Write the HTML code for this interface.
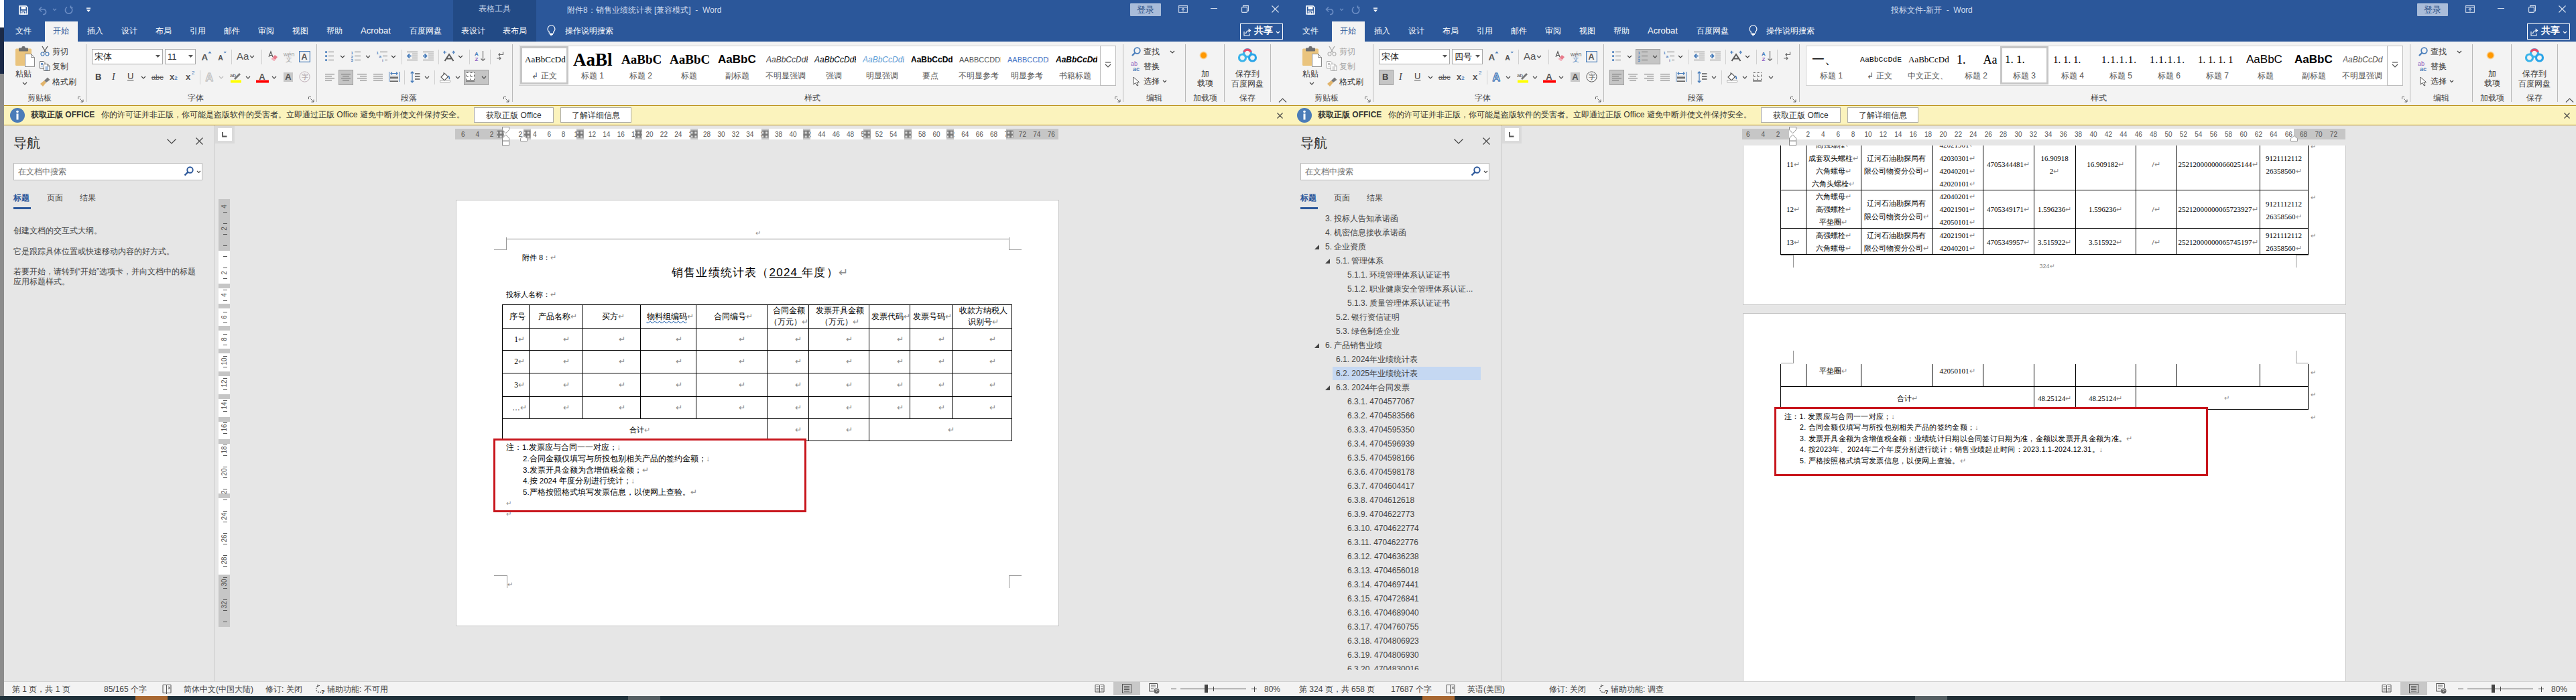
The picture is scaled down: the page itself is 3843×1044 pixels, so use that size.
<!DOCTYPE html><html><head><meta charset="utf-8"><title>Word</title><style>
*{margin:0;padding:0}
html,body{width:3843px;height:1044px;overflow:hidden;background:#8a8a8a}
body{position:relative;font-family:'Liberation Sans',sans-serif;}
.w{position:absolute;top:0;width:1926px;height:1038px;overflow:hidden}
.t{position:absolute;white-space:nowrap}
.r{position:absolute}
.s{position:absolute;overflow:visible}
</style></head><body><div class="r" style="left:0px;top:0px;width:6px;height:41px;background:#ffffff;"></div><div class="r" style="left:0px;top:41px;width:6px;height:69px;background:#1b2a48;"></div><div class="r" style="left:0px;top:110px;width:6px;height:928px;background:#8c8c8c;"></div><div class="w" style="left:0px"><div class="r" style="left:6px;top:0px;width:1920px;height:62px;background:#2b579a;"></div><div class="r" style="left:676px;top:0px;width:124px;height:62px;background:#224a85;"></div><div class="t" style="left:676px;width:124px;text-align:center;top:2.8px;line-height:20px;font-size:12px;color:#c5d2e6;">表格工具</div><div class="t" style="left:846px;top:4.5px;line-height:20px;font-size:12px;color:#d3deef;">附件8：销售业绩统计表 [兼容模式]&nbsp; -&nbsp; Word</div><svg class="s" style="left:28px;top:8px;" width="14" height="14" viewBox="0 0 14 14"><path d="M1 1 H11 L13 3 V13 H1 Z" fill="none" stroke="#fff" stroke-width="1.6"/><rect x="3.5" y="2" width="7" height="4" fill="#fff"/><rect x="3.5" y="8.5" width="7" height="4.5" fill="none" stroke="#fff" stroke-width="1.4"/><rect x="5.5" y="10" width="2" height="3" fill="#fff"/></svg><svg class="s" style="left:57px;top:9px;" width="15" height="13" viewBox="0 0 15 13"><path d="M2 5 H9 A4 4 0 0 1 9 12.5 H7" fill="none" stroke="#6b8dc4" stroke-width="1.6"/><path d="M5 1.5 L1.5 5 L5 8.5" fill="none" stroke="#6b8dc4" stroke-width="1.6"/></svg><svg class="s" style="left:78px;top:12.25px;" width="7" height="4.5" viewBox="0 0 7 4.5"><path d="M1 1 L3.5 3.5 L6 1" fill="none" stroke="#6b8dc4" stroke-width="1.2"/></svg><svg class="s" style="left:96px;top:8px;" width="14" height="14" viewBox="0 0 14 14"><path d="M9.5 2.8 A5.2 5.2 0 1 1 4 2.6" fill="none" stroke="#6b8dc4" stroke-width="1.6"/><path d="M9.5 0.5 V3.5 H12.5" fill="none" stroke="#6b8dc4" stroke-width="1.6"/></svg><svg class="s" style="left:129px;top:11px;" width="6" height="8" viewBox="0 0 6 8"><rect x="0" y="0.5" width="6" height="1.4" fill="#fff"/><path d="M0 3.5 H6 L3 7 Z" fill="#fff"/></svg><div class="r" style="left:67px;top:32px;width:49px;height:30px;background:#f3f3f3;"></div><div class="t" style="left:23px;top:35.5px;line-height:20px;font-size:12px;color:#ffffff;">文件</div><div class="t" style="left:79px;top:35.5px;line-height:20px;font-size:12px;color:#2b579a;">开始</div><div class="t" style="left:130px;top:35.5px;line-height:20px;font-size:12px;color:#ffffff;">插入</div><div class="t" style="left:181px;top:35.5px;line-height:20px;font-size:12px;color:#ffffff;">设计</div><div class="t" style="left:232px;top:35.5px;line-height:20px;font-size:12px;color:#ffffff;">布局</div><div class="t" style="left:283px;top:35.5px;line-height:20px;font-size:12px;color:#ffffff;">引用</div><div class="t" style="left:334px;top:35.5px;line-height:20px;font-size:12px;color:#ffffff;">邮件</div><div class="t" style="left:385px;top:35.5px;line-height:20px;font-size:12px;color:#ffffff;">审阅</div><div class="t" style="left:436px;top:35.5px;line-height:20px;font-size:12px;color:#ffffff;">视图</div><div class="t" style="left:487px;top:35.5px;line-height:20px;font-size:12px;color:#ffffff;">帮助</div><div class="t" style="left:538px;top:35.5px;line-height:20px;font-size:13px;color:#ffffff;">Acrobat</div><div class="t" style="left:611px;top:35.5px;line-height:20px;font-size:12px;color:#ffffff;">百度网盘</div><div class="t" style="left:688px;top:35.5px;line-height:20px;font-size:12px;color:#ffffff;">表设计</div><div class="t" style="left:750px;top:35.5px;line-height:20px;font-size:12px;color:#ffffff;">表布局</div><svg class="s" style="left:816px;top:37px;" width="13" height="17" viewBox="0 0 13 17"><path d="M6.5 1 A5.2 5.2 0 0 0 3.3 10.4 V12.5 H9.7 V10.4 A5.2 5.2 0 0 0 6.5 1 Z" fill="none" stroke="#fff" stroke-width="1.2"/><path d="M4 14.3 H9 M5 16 H8" stroke="#fff" stroke-width="1.2"/></svg><div class="t" style="left:843px;top:35.5px;line-height:20px;font-size:12px;color:#fff;">操作说明搜索</div><div class="r" style="left:1686px;top:5px;width:46px;height:19px;background:#a9bcd9;border-radius:1px;"></div><div class="t" style="left:1686px;width:46px;text-align:center;top:4.5px;line-height:20px;font-size:13px;color:#2b4f86;">登录</div><svg class="s" style="left:1758px;top:8px;" width="14" height="11" viewBox="0 0 14 11"><rect x="0.6" y="0.6" width="12.8" height="9.8" fill="none" stroke="#c8d4e8" stroke-width="1.1"/><path d="M0.6 3 H13.4" stroke="#c8d4e8" stroke-width="1.1"/><path d="M7 9.5 V4.5 M4.8 6.6 L7 4.4 L9.2 6.6" fill="none" stroke="#c8d4e8" stroke-width="1.1"/></svg><div class="r" style="left:1806px;top:12px;width:10px;height:1px;background:#d8e1ef;"></div><svg class="s" style="left:1852px;top:8px;" width="11" height="11" viewBox="0 0 11 11"><rect x="0.6" y="2.6" width="7.8" height="7.8" fill="none" stroke="#d8e1ef" stroke-width="1.1" rx="1"/><path d="M2.6 2.6 V0.6 H10.4 V8.4 H8.4" fill="none" stroke="#d8e1ef" stroke-width="1.1"/></svg><svg class="s" style="left:1897px;top:8px;" width="11" height="11" viewBox="0 0 11 11"><path d="M0.5 0.5 L10.5 10.5 M10.5 0.5 L0.5 10.5" stroke="#d8e1ef" stroke-width="1.1"/></svg><div class="r" style="left:1850px;top:35px;width:64px;height:24px;background:none;border:1.5px solid #fff;box-sizing:border-box;"></div><svg class="s" style="left:1855px;top:41px;" width="13" height="13" viewBox="0 0 13 13"><path d="M1 6 V12 H9 V9" fill="none" stroke="#fff" stroke-width="1.1"/><path d="M3.5 9.5 C4 6 6.5 4.5 9.5 4.5 M7.5 2 L10.5 4.5 L7.5 7" fill="none" stroke="#fff" stroke-width="1.2"/></svg><div class="t" style="left:1871px;top:35.5px;line-height:20px;font-size:13.5px;color:#fff;font-weight:700;">共享</div><svg class="s" style="left:1903px;top:45.75px;" width="7" height="4.5" viewBox="0 0 7 4.5"><path d="M1 1 L3.5 3.5 L6 1" fill="none" stroke="#fff" stroke-width="1.2"/></svg><div class="r" style="left:6px;top:62px;width:1920px;height:95px;background:#f3f3f3;"></div><svg class="s" style="left:23px;top:69px;" width="29" height="32" viewBox="0 0 29 32"><rect x="0" y="3.5" width="24" height="25.5" rx="1.5" fill="#eac47e"/><rect x="5" y="2.5" width="14" height="5" rx="1" fill="#6f6f6f"/><rect x="9.5" y="0" width="5" height="4" rx="1.5" fill="#6f6f6f"/><path d="M14.5 11.5 H23.5 L28.5 16.5 V30.5 H14.5 Z" fill="#fff" stroke="#8a8a8a" stroke-width="1"/><path d="M23.5 11.5 V16.5 H28.5" fill="none" stroke="#8a8a8a" stroke-width="1"/></svg><div class="t" style="left:23px;top:99.5px;line-height:20px;font-size:12px;color:#333;">粘贴</div><svg class="s" style="left:33px;top:121.5px;" width="8" height="5.0" viewBox="0 0 8 5.0"><path d="M1 1 L4.0 4.0 L7 1" fill="none" stroke="#444" stroke-width="1.2"/></svg><svg class="s" style="left:60px;top:68px;" width="14" height="16" viewBox="0 0 14 16"><path d="M3 1 L9 11 M11 1 L5 11" stroke="#555" stroke-width="1.3"/><circle cx="3.5" cy="12.5" r="2.5" fill="none" stroke="#4a7ebb" stroke-width="1.2"/><circle cx="10.5" cy="12.5" r="2.5" fill="none" stroke="#4a7ebb" stroke-width="1.2"/></svg><div class="t" style="left:78px;top:66.5px;line-height:20px;font-size:12px;color:#444;">剪切</div><svg class="s" style="left:59px;top:91px;" width="16" height="15" viewBox="0 0 16 15"><path d="M0.5 0.5 H6 L8 2.5 V11 H0.5 Z" fill="#fff" stroke="#666" stroke-width="1"/><path d="M2 3.5 H5 M2 5.5 H5 M2 7.5 H5" stroke="#4a7ebb" stroke-width="1"/><path d="M6.5 4.5 H12 L15 7.5 V14.5 H6.5 Z" fill="#fff" stroke="#666" stroke-width="1"/><path d="M12 4.5 V7.5 H15" fill="none" stroke="#666" stroke-width="1"/><path d="M8.5 9 H13 M8.5 11 H13 M8.5 13 H13" stroke="#4a7ebb" stroke-width="1"/></svg><div class="t" style="left:78px;top:88.5px;line-height:20px;font-size:12px;color:#444;">复制</div><svg class="s" style="left:59px;top:114px;" width="17" height="16" viewBox="0 0 17 16"><path d="M1 11 L7 6 L10 9 L5 15 Z" fill="#e2b56c"/><path d="M7 6 L12 1.5 L15.5 5 L10 9 Z" fill="#7a7a7a"/></svg><div class="t" style="left:78px;top:112.0px;line-height:20px;font-size:12px;color:#333;">格式刷</div><div class="t" style="left:41px;top:135.6px;line-height:20px;font-size:12px;color:#444;">剪贴板</div><svg class="s" style="left:116px;top:144px;" width="9" height="9" viewBox="0 0 9 9"><path d="M0.5 4 V0.5 H4 M0.5 0.5 H0.5" fill="none" stroke="#666" stroke-width="1"/><path d="M3 3 L8 8 M8 4.5 V8 H4.5" fill="none" stroke="#666" stroke-width="1"/></svg><div class="r" style="left:128px;top:66px;width:1px;height:86px;background:#b9b9b9;"></div><div class="r" style="left:137px;top:73px;width:106px;height:23px;background:#fff;border:1px solid #a9a9a9;box-sizing:border-box;"></div><div class="t" style="left:141px;top:74.5px;line-height:20px;font-size:13px;color:#222;">宋体</div><svg class="s" style="left:232px;top:82px;" width="7" height="4" viewBox="0 0 7 4"><path d="M0 0 H7 L3.5 4 Z" fill="#555"/></svg><div class="r" style="left:246px;top:73px;width:46px;height:23px;background:#fff;border:1px solid #a9a9a9;box-sizing:border-box;"></div><div class="t" style="left:250px;top:74.5px;line-height:20px;font-size:13px;color:#222;">11</div><svg class="s" style="left:281px;top:82px;" width="7" height="4" viewBox="0 0 7 4"><path d="M0 0 H7 L3.5 4 Z" fill="#555"/></svg><svg class="s" style="left:300px;top:76px;" width="16" height="16" viewBox="0 0 16 16"><text x="0.5" y="14.2" font-size="13.5" font-family="Liberation Sans" font-weight="700" fill="#555">A</text><path d="M10.5 3.5 L13 0.5 L15.5 3.5 Z" fill="#4a7ebb"/></svg><svg class="s" style="left:325px;top:76px;" width="14" height="16" viewBox="0 0 14 16"><text x="0.3" y="14.2" font-size="10.5" font-family="Liberation Sans" font-weight="700" fill="#555">A</text><path d="M8.5 1 H13 L10.75 3.5 Z" fill="#4a7ebb"/></svg><div class="r" style="left:345px;top:74px;width:1px;height:22px;background:#d0d0d0;"></div><div class="t" style="left:353px;top:74.0px;line-height:20px;font-size:15px;color:#555;">Aa</div><svg class="s" style="left:372px;top:82.0px;" width="8" height="5.0" viewBox="0 0 8 5.0"><path d="M1 1 L4.0 4.0 L7 1" fill="none" stroke="#444" stroke-width="1.2"/></svg><div class="r" style="left:390px;top:74px;width:1px;height:22px;background:#d0d0d0;"></div><svg class="s" style="left:400px;top:76px;" width="15" height="16" viewBox="0 0 15 16"><path d="M1 9 L4 1 L7 9 M2 6.5 H6" fill="none" stroke="#555" stroke-width="1.2"/><path d="M5 12 L10 6 L14 9 L9 15 Z" fill="#e87a8a"/><path d="M5 12 L7 10 L11 13 L9 15 Z" fill="#f3b3bd"/></svg><div class="t" style="left:423px;top:76.0px;line-height:10px;font-size:9px;color:#a0a0a0;">wén</div><div class="t" style="left:426px;top:84.0px;line-height:10px;font-size:10px;color:#a0a0a0;">文</div><svg class="s" style="left:446px;top:76px;" width="17" height="17" viewBox="0 0 17 17"><rect x="0.6" y="0.6" width="15.8" height="15.8" fill="none" stroke="#4a7ebb" stroke-width="1.2"/><text x="3.6" y="12.8" font-size="12.5" font-family="Liberation Sans" font-weight="700" fill="#555">A</text></svg><div class="t" style="left:142px;top:104.5px;line-height:20px;font-size:13px;color:#444;font-weight:700;">B</div><div class="t" style="left:167px;top:104.5px;line-height:20px;font-size:14px;color:#444;font-family:'Liberation Serif',serif;"><i>I</i></div><div class="t" style="left:190px;top:104.0px;line-height:20px;font-size:13px;color:#444;"><u>U</u></div><svg class="s" style="left:210px;top:112.5px;" width="8" height="5.0" viewBox="0 0 8 5.0"><path d="M1 1 L4.0 4.0 L7 1" fill="none" stroke="#444" stroke-width="1.2"/></svg><div class="t" style="left:226px;top:105.0px;line-height:20px;font-size:11px;color:#555;"><s>abc</s></div><div class="t" style="left:253px;top:104.5px;line-height:20px;font-size:13px;color:#555;font-weight:700;letter-spacing:0px">x<span style="font-size:8px;color:#4a7ebb">2</span></div><div class="t" style="left:277px;top:104.5px;line-height:20px;font-size:13px;color:#555;font-weight:700;">x</div><div class="t" style="left:286px;top:105.0px;line-height:8px;font-size:8px;color:#4a7ebb;">2</div><div class="r" style="left:298px;top:105px;width:1px;height:21px;background:#d0d0d0;"></div><svg class="s" style="left:305px;top:106px;" width="18" height="17" viewBox="0 0 18 17"><text x="1.5" y="15" font-size="16" font-family="Liberation Sans" font-weight="700" fill="#f8f8f8" stroke="#c4c4c4" stroke-width="1.3" stroke-linejoin="round">A</text></svg><svg class="s" style="left:326px;top:112.5px;" width="8" height="5.0" viewBox="0 0 8 5.0"><path d="M1 1 L4.0 4.0 L7 1" fill="none" stroke="#bbb" stroke-width="1.2"/></svg><svg class="s" style="left:343px;top:107px;" width="18" height="17" viewBox="0 0 18 17"><text x="0" y="8" font-size="8" fill="#555" font-family="Liberation Sans">ab</text><path d="M6 10 L14 2 L16 4 L8 12 Z" fill="#777"/><rect x="1" y="12.5" width="16" height="4" fill="#ffff00"/></svg><svg class="s" style="left:366px;top:112.5px;" width="8" height="5.0" viewBox="0 0 8 5.0"><path d="M1 1 L4.0 4.0 L7 1" fill="none" stroke="#444" stroke-width="1.2"/></svg><svg class="s" style="left:382px;top:107px;" width="19" height="17" viewBox="0 0 19 17"><text x="4.3" y="11.8" font-size="13" font-family="Liberation Sans" font-weight="700" fill="#555">A</text><rect x="0" y="12.5" width="19" height="4" fill="#ff0000"/></svg><svg class="s" style="left:405px;top:112.5px;" width="8" height="5.0" viewBox="0 0 8 5.0"><path d="M1 1 L4.0 4.0 L7 1" fill="none" stroke="#444" stroke-width="1.2"/></svg><div class="r" style="left:423px;top:108px;width:14px;height:14px;background:#c8c8c8;"></div><svg class="s" style="left:423px;top:108px;" width="14" height="14" viewBox="0 0 14 14"><text x="2.3" y="11" font-size="13" font-family="Liberation Sans" font-weight="700" fill="#555">A</text></svg><svg class="s" style="left:446px;top:106px;" width="17" height="17" viewBox="0 0 17 17"><circle cx="8.5" cy="8.5" r="7.6" fill="none" stroke="#c0b0b8" stroke-width="1"/></svg><div class="t" style="left:446px;width:17px;text-align:center;top:104.5px;line-height:20px;font-size:10px;color:#a09098;">字</div><div class="t" style="left:280px;top:135.6px;line-height:20px;font-size:12px;color:#444;">字体</div><svg class="s" style="left:460px;top:144px;" width="9" height="9" viewBox="0 0 9 9"><path d="M0.5 4 V0.5 H4 M0.5 0.5 H0.5" fill="none" stroke="#666" stroke-width="1"/><path d="M3 3 L8 8 M8 4.5 V8 H4.5" fill="none" stroke="#666" stroke-width="1"/></svg><div class="r" style="left:472px;top:66px;width:1px;height:86px;background:#b9b9b9;"></div><svg class="s" style="left:484px;top:75px;" width="15" height="16" viewBox="0 0 15 16"><circle cx="2.5" cy="2.6" r="1.6" fill="#4a7ebb"/><circle cx="2.5" cy="8.6" r="1.6" fill="#4a7ebb"/><circle cx="2.5" cy="14.6" r="1.6" fill="#4a7ebb"/><path d="M6 2.5 H14 M6 8.5 H14 M6 14.5 H14" stroke="#6a6a6a" stroke-width="1"/></svg><svg class="s" style="left:507px;top:82.0px;" width="8" height="5.0" viewBox="0 0 8 5.0"><path d="M1 1 L4.0 4.0 L7 1" fill="none" stroke="#444" stroke-width="1.2"/></svg><svg class="s" style="left:523px;top:75px;" width="16" height="17" viewBox="0 0 16 17"><text x="0.5" y="5.5" font-size="6" font-weight="700" fill="#4a7ebb" font-family="Liberation Sans">1</text><text x="0.5" y="11.5" font-size="6" font-weight="700" fill="#4a7ebb" font-family="Liberation Sans">2</text><text x="0.5" y="17" font-size="6" font-weight="700" fill="#4a7ebb" font-family="Liberation Sans">3</text><path d="M6 2.5 H15 M6 8.5 H15 M6 14.5 H15" stroke="#6a6a6a" stroke-width="1"/></svg><svg class="s" style="left:545px;top:82.0px;" width="8" height="5.0" viewBox="0 0 8 5.0"><path d="M1 1 L4.0 4.0 L7 1" fill="none" stroke="#444" stroke-width="1.2"/></svg><svg class="s" style="left:561px;top:75px;" width="18" height="17" viewBox="0 0 18 17"><text x="0.5" y="5.5" font-size="6" font-weight="700" fill="#4a7ebb" font-family="Liberation Sans">1</text><text x="4.5" y="11" font-size="6" font-weight="700" fill="#4a7ebb" font-family="Liberation Sans">a</text><text x="9" y="17" font-size="6" font-weight="700" fill="#4a7ebb" font-family="Liberation Sans">i</text><path d="M6 2.5 H17 M10 8.5 H17 M13 14.5 H17" stroke="#6a6a6a" stroke-width="1"/></svg><svg class="s" style="left:583px;top:82.0px;" width="8" height="5.0" viewBox="0 0 8 5.0"><path d="M1 1 L4.0 4.0 L7 1" fill="none" stroke="#444" stroke-width="1.2"/></svg><div class="r" style="left:599px;top:74px;width:1px;height:22px;background:#d0d0d0;"></div><svg class="s" style="left:607px;top:75px;" width="17" height="16" viewBox="0 0 17 16"><path d="M0 2.5 H16 M8 5.5 H16 M8 8.5 H16 M8 11.5 H16 M0 14.5 H16" stroke="#6a6a6a" stroke-width="1"/><path d="M1 8.5 H6.5 M4 5.5 L1 8.5 L4 11.5" fill="none" stroke="#4a7ebb" stroke-width="1.8"/></svg><svg class="s" style="left:631px;top:75px;" width="17" height="16" viewBox="0 0 17 16"><path d="M0 2.5 H16 M8 5.5 H16 M8 8.5 H16 M8 11.5 H16 M0 14.5 H16" stroke="#6a6a6a" stroke-width="1"/><path d="M0 8.5 H5.5 M2.5 5.5 L5.5 8.5 L2.5 11.5" fill="none" stroke="#4a7ebb" stroke-width="1.8"/></svg><div class="r" style="left:654px;top:74px;width:1px;height:22px;background:#d0d0d0;"></div><svg class="s" style="left:661px;top:75px;" width="18" height="17" viewBox="0 0 18 17"><path d="M2.5 16 L9 6 L15.5 16 M5 12.5 H13" fill="none" stroke="#5a5a5a" stroke-width="2"/><path d="M1 3 H5 M3 1 L1 3 L3 5 M17 3 H13 M15 1 L17 3 L15 5" fill="none" stroke="#4a7ebb" stroke-width="1.2"/></svg><svg class="s" style="left:683px;top:82.0px;" width="8" height="5.0" viewBox="0 0 8 5.0"><path d="M1 1 L4.0 4.0 L7 1" fill="none" stroke="#444" stroke-width="1.2"/></svg><div class="r" style="left:700px;top:74px;width:1px;height:22px;background:#d0d0d0;"></div><svg class="s" style="left:708px;top:75px;" width="16" height="17" viewBox="0 0 16 17"><text x="0" y="7.5" font-size="8" font-weight="700" fill="#4a7ebb" font-family="Liberation Sans">A</text><text x="0.5" y="16" font-size="8" font-weight="700" fill="#8a5cc0" font-family="Liberation Sans">Z</text><path d="M12.5 1 V15.5 M9.5 12.5 L12.5 15.5 L15.5 12.5" fill="none" stroke="#6a6a6a" stroke-width="1.2"/></svg><div class="r" style="left:731px;top:74px;width:1px;height:22px;background:#d0d0d0;"></div><svg class="s" style="left:740px;top:77px;" width="12" height="13" viewBox="0 0 12 13"><path d="M10.5 0.5 V4.5 H4 M6 2.5 L4 4.5 L6 6.5" fill="none" stroke="#6a6a6a" stroke-width="1.2"/><path d="M1 10 H7 M5 8 L7 10 L5 12" fill="none" stroke="#6a6a6a" stroke-width="1.2"/></svg><div class="r" style="left:505px;top:104px;width:22px;height:23px;background:#c5c5c5;border:1px solid #9d9d9d;box-sizing:border-box;"></div><svg class="s" style="left:485px;top:109px;" width="15" height="13" viewBox="0 0 15 13"><path d="M0 1.5 h14M0 4.5 h10M0 7.5 h14M0 10.5 h10" stroke="#6a6a6a" stroke-width="1"/></svg><svg class="s" style="left:509px;top:109px;" width="15" height="13" viewBox="0 0 15 13"><path d="M0 1.5 h14M2 4.5 h10M0 7.5 h14M2 10.5 h10" stroke="#6a6a6a" stroke-width="1"/></svg><svg class="s" style="left:533px;top:109px;" width="15" height="13" viewBox="0 0 15 13"><path d="M0 1.5 h14M4 4.5 h10M0 7.5 h14M4 10.5 h10" stroke="#6a6a6a" stroke-width="1"/></svg><svg class="s" style="left:557px;top:109px;" width="15" height="13" viewBox="0 0 15 13"><path d="M0 1.5 h14M0 4.5 h14M0 7.5 h14M0 10.5 h14" stroke="#6a6a6a" stroke-width="1"/></svg><svg class="s" style="left:579px;top:106px;" width="18" height="17" viewBox="0 0 18 17"><path d="M1.5 1 V16 M16.5 1 V16" stroke="#4a7ebb" stroke-width="1"/><path d="M3.5 3.5 H14.5 M6 1.5 L4 3.5 L6 5.5 M12 1.5 L14 3.5 L12 5.5" fill="none" stroke="#4a7ebb" stroke-width="1.2"/><path d="M3 7.5 H15 M3 9.5 H15 M3 11.5 H15 M3 13.5 H15 M3 15.5 H15" stroke="#6a6a6a" stroke-width="1"/></svg><div class="r" style="left:603px;top:105px;width:1px;height:21px;background:#d0d0d0;"></div><svg class="s" style="left:612px;top:106px;" width="15" height="18" viewBox="0 0 15 18"><path d="M3 1 V17 M0.8 3.5 L3 1 L5.2 3.5 M0.8 14.5 L3 17 L5.2 14.5" fill="none" stroke="#4a7ebb" stroke-width="1.3"/><path d="M7 4 H14.5 M7 8 H14.5 M7 12 H14.5" stroke="#555" stroke-width="1.4"/></svg><svg class="s" style="left:633px;top:112.5px;" width="8" height="5.0" viewBox="0 0 8 5.0"><path d="M1 1 L4.0 4.0 L7 1" fill="none" stroke="#444" stroke-width="1.2"/></svg><div class="r" style="left:648px;top:105px;width:1px;height:21px;background:#d0d0d0;"></div><svg class="s" style="left:656px;top:107px;" width="17" height="16" viewBox="0 0 17 16"><path d="M2 8 L7.5 2.5 L12.5 7.5 L7 13 Z" fill="#fff" stroke="#555" stroke-width="1.1"/><path d="M6 1 V4" stroke="#555"/><path d="M13 6 C14.5 8 15 9.5 14 11" fill="none" stroke="#4a7ebb" stroke-width="1.6"/><rect x="0.5" y="13" width="15" height="2.5" fill="#fff" stroke="#999" stroke-width="0.8"/></svg><svg class="s" style="left:679px;top:112.5px;" width="8" height="5.0" viewBox="0 0 8 5.0"><path d="M1 1 L4.0 4.0 L7 1" fill="none" stroke="#444" stroke-width="1.2"/></svg><div class="r" style="left:692px;top:104px;width:37px;height:23px;background:#c5c5c5;border:1px solid #9d9d9d;box-sizing:border-box;"></div><svg class="s" style="left:695px;top:108px;" width="14" height="14" viewBox="0 0 14 14"><rect x="0" y="0" width="13" height="13" fill="#fff"/><rect x="0" y="0" width="1" height="1" fill="#555"/><rect x="0" y="0" width="1" height="1" fill="#555"/><rect x="0" y="6" width="1" height="1" fill="#555"/><rect x="6" y="0" width="1" height="1" fill="#555"/><rect x="0" y="12" width="1" height="1" fill="#555"/><rect x="12" y="0" width="1" height="1" fill="#555"/><rect x="2" y="0" width="1" height="1" fill="#555"/><rect x="0" y="2" width="1" height="1" fill="#555"/><rect x="2" y="6" width="1" height="1" fill="#555"/><rect x="6" y="2" width="1" height="1" fill="#555"/><rect x="2" y="12" width="1" height="1" fill="#555"/><rect x="12" y="2" width="1" height="1" fill="#555"/><rect x="4" y="0" width="1" height="1" fill="#555"/><rect x="0" y="4" width="1" height="1" fill="#555"/><rect x="4" y="6" width="1" height="1" fill="#555"/><rect x="6" y="4" width="1" height="1" fill="#555"/><rect x="4" y="12" width="1" height="1" fill="#555"/><rect x="12" y="4" width="1" height="1" fill="#555"/><rect x="6" y="0" width="1" height="1" fill="#555"/><rect x="0" y="6" width="1" height="1" fill="#555"/><rect x="6" y="6" width="1" height="1" fill="#555"/><rect x="6" y="6" width="1" height="1" fill="#555"/><rect x="6" y="12" width="1" height="1" fill="#555"/><rect x="12" y="6" width="1" height="1" fill="#555"/><rect x="8" y="0" width="1" height="1" fill="#555"/><rect x="0" y="8" width="1" height="1" fill="#555"/><rect x="8" y="6" width="1" height="1" fill="#555"/><rect x="6" y="8" width="1" height="1" fill="#555"/><rect x="8" y="12" width="1" height="1" fill="#555"/><rect x="12" y="8" width="1" height="1" fill="#555"/><rect x="10" y="0" width="1" height="1" fill="#555"/><rect x="0" y="10" width="1" height="1" fill="#555"/><rect x="10" y="6" width="1" height="1" fill="#555"/><rect x="6" y="10" width="1" height="1" fill="#555"/><rect x="10" y="12" width="1" height="1" fill="#555"/><rect x="12" y="10" width="1" height="1" fill="#555"/><rect x="12" y="0" width="1" height="1" fill="#555"/><rect x="0" y="12" width="1" height="1" fill="#555"/><rect x="12" y="6" width="1" height="1" fill="#555"/><rect x="6" y="12" width="1" height="1" fill="#555"/><rect x="12" y="12" width="1" height="1" fill="#555"/><rect x="12" y="12" width="1" height="1" fill="#555"/><rect x="0" y="12" width="13" height="1.5" fill="#444"/></svg><svg class="s" style="left:718px;top:112.5px;" width="8" height="5.0" viewBox="0 0 8 5.0"><path d="M1 1 L4.0 4.0 L7 1" fill="none" stroke="#444" stroke-width="1.2"/></svg><div class="t" style="left:598px;top:135.6px;line-height:20px;font-size:12px;color:#444;">段落</div><svg class="s" style="left:751px;top:144px;" width="9" height="9" viewBox="0 0 9 9"><path d="M0.5 4 V0.5 H4 M0.5 0.5 H0.5" fill="none" stroke="#666" stroke-width="1"/><path d="M3 3 L8 8 M8 4.5 V8 H4.5" fill="none" stroke="#666" stroke-width="1"/></svg><div class="r" style="left:764px;top:66px;width:1px;height:86px;background:#b9b9b9;"></div><div class="r" style="left:774px;top:68px;width:868px;height:60px;background:#fff;border:1px solid #d2d2d2;box-sizing:border-box;"></div><div class="r" style="left:1641px;top:68px;width:24px;height:60px;background:#fff;border:1px solid #bdbdbd;box-sizing:border-box;"></div><svg class="s" style="left:1648px;top:92px;" width="10" height="10" viewBox="0 0 10 10"><path d="M1 1 H9" stroke="#555" stroke-width="1.2"/><path d="M1 4 L5 8 L9 4" fill="none" stroke="#555" stroke-width="1.2"/></svg><div class="t" style="left:1200px;top:135.6px;line-height:20px;font-size:12px;color:#444;">样式</div><svg class="s" style="left:1663px;top:144px;" width="9" height="9" viewBox="0 0 9 9"><path d="M0.5 4 V0.5 H4 M0.5 0.5 H0.5" fill="none" stroke="#666" stroke-width="1"/><path d="M3 3 L8 8 M8 4.5 V8 H4.5" fill="none" stroke="#666" stroke-width="1"/></svg><div class="r" style="left:1675px;top:66px;width:1px;height:86px;background:#b9b9b9;"></div><div class="r" style="left:776px;top:69px;width:72px;height:57px;background:#fff;border:3px solid #c6c6c6;box-sizing:border-box;"></div><div class="t" style="left:783px;top:75px;width:62px;height:28px;line-height:28px;overflow:hidden;text-align:left;font-family:'Liberation Serif',serif;font-size:13px;color:#000;">AaBbCcDd</div><div class="t" style="left:776px;width:72px;text-align:center;top:102.5px;line-height:20px;font-size:12px;color:#555;">↲ 正文</div><div class="t" style="left:855px;top:75px;width:62px;height:28px;line-height:28px;overflow:hidden;text-align:left;font-family:'Liberation Serif',serif;font-size:27px;font-weight:700;color:#000;">AaBl</div><div class="t" style="left:848px;width:72px;text-align:center;top:102.5px;line-height:20px;font-size:12px;color:#555;">标题 1</div><div class="t" style="left:927px;top:75px;width:62px;height:28px;line-height:28px;overflow:hidden;text-align:left;font-family:'Liberation Serif',serif;font-size:19px;font-weight:700;color:#000;">AaBbC</div><div class="t" style="left:920px;width:72px;text-align:center;top:102.5px;line-height:20px;font-size:12px;color:#555;">标题 2</div><div class="t" style="left:999px;top:75px;width:62px;height:28px;line-height:28px;overflow:hidden;text-align:left;font-family:'Liberation Serif',serif;font-size:19px;font-weight:700;color:#000;">AaBbC</div><div class="t" style="left:992px;width:72px;text-align:center;top:102.5px;line-height:20px;font-size:12px;color:#555;">标题</div><div class="t" style="left:1071px;top:75px;width:62px;height:28px;line-height:28px;overflow:hidden;text-align:left;font-size:17px;font-weight:700;color:#000;">AaBbC</div><div class="t" style="left:1064px;width:72px;text-align:center;top:102.5px;line-height:20px;font-size:12px;color:#555;">副标题</div><div class="t" style="left:1143px;top:75px;width:62px;height:28px;line-height:28px;overflow:hidden;text-align:left;font-size:12px;color:#444;"><i>AaBbCcDdE</i></div><div class="t" style="left:1136px;width:72px;text-align:center;top:102.5px;line-height:20px;font-size:12px;color:#555;">不明显强调</div><div class="t" style="left:1215px;top:75px;width:62px;height:28px;line-height:28px;overflow:hidden;text-align:left;font-size:12px;color:#000;"><i>AaBbCcDdE</i></div><div class="t" style="left:1208px;width:72px;text-align:center;top:102.5px;line-height:20px;font-size:12px;color:#555;">强调</div><div class="t" style="left:1287px;top:75px;width:62px;height:28px;line-height:28px;overflow:hidden;text-align:left;font-size:12px;color:#5b9bd5;"><i>AaBbCcDdE</i></div><div class="t" style="left:1280px;width:72px;text-align:center;top:102.5px;line-height:20px;font-size:12px;color:#555;">明显强调</div><div class="t" style="left:1359px;top:75px;width:62px;height:28px;line-height:28px;overflow:hidden;text-align:left;font-size:12px;font-weight:700;color:#000;">AaBbCcDdE</div><div class="t" style="left:1352px;width:72px;text-align:center;top:102.5px;line-height:20px;font-size:12px;color:#555;">要点</div><div class="t" style="left:1431px;top:75px;width:62px;height:28px;line-height:28px;overflow:hidden;text-align:left;font-size:11px;color:#555;">AABBCCDDE</div><div class="t" style="left:1424px;width:72px;text-align:center;top:102.5px;line-height:20px;font-size:12px;color:#555;">不明显参考</div><div class="t" style="left:1503px;top:75px;width:62px;height:28px;line-height:28px;overflow:hidden;text-align:left;font-size:11px;color:#4472c4;">AABBCCDDE</div><div class="t" style="left:1496px;width:72px;text-align:center;top:102.5px;line-height:20px;font-size:12px;color:#555;">明显参考</div><div class="t" style="left:1575px;top:75px;width:62px;height:28px;line-height:28px;overflow:hidden;text-align:left;font-size:12px;font-weight:700;color:#000;"><i>AaBbCcDdE</i></div><div class="t" style="left:1568px;width:72px;text-align:center;top:102.5px;line-height:20px;font-size:12px;color:#555;">书籍标题</div><svg class="s" style="left:1688px;top:70px;" width="14" height="14" viewBox="0 0 14 14"><circle cx="8.5" cy="5.5" r="4.3" fill="none" stroke="#4a7ebb" stroke-width="1.8"/><path d="M5.5 8.5 L1 13" stroke="#4a7ebb" stroke-width="2.4"/></svg><div class="t" style="left:1706px;top:66.5px;line-height:20px;font-size:12px;color:#333;">查找</div><svg class="s" style="left:1745px;top:74.5px;" width="8" height="5.0" viewBox="0 0 8 5.0"><path d="M1 1 L4.0 4.0 L7 1" fill="none" stroke="#444" stroke-width="1.2"/></svg><div class="t" style="left:1687px;top:90.0px;line-height:10px;font-size:9px;color:#8a5cc0;">ab</div><div class="t" style="left:1690px;top:97.5px;line-height:10px;font-size:9px;color:#4a7ebb;font-weight:700;">ac</div><div class="t" style="left:1706px;top:88.5px;line-height:20px;font-size:12px;color:#333;">替换</div><svg class="s" style="left:1690px;top:114px;" width="11" height="15" viewBox="0 0 11 15"><path d="M1 1 L1 12 L4 9.5 L6.5 14 L8 13.2 L5.8 8.8 L9.5 8.5 Z" fill="#fff" stroke="#555" stroke-width="1"/></svg><div class="t" style="left:1706px;top:111.0px;line-height:20px;font-size:12px;color:#333;">选择</div><svg class="s" style="left:1734px;top:119.25px;" width="7" height="4.5" viewBox="0 0 7 4.5"><path d="M1 1 L3.5 3.5 L6 1" fill="none" stroke="#444" stroke-width="1.2"/></svg><div class="t" style="left:1710px;top:135.6px;line-height:20px;font-size:12px;color:#444;">编辑</div><div class="r" style="left:1768px;top:66px;width:1px;height:86px;background:#b9b9b9;"></div><svg class="s" style="left:1789px;top:76px;" width="13" height="13" viewBox="0 0 13 13"><defs><radialGradient id="og"><stop offset="0.55" stop-color="#ff9800"/><stop offset="1" stop-color="#ffb74d" stop-opacity="0"/></radialGradient></defs><circle cx="6.5" cy="6.5" r="6.5" fill="url(#og)"/></svg><div class="t" style="left:1769px;width:57px;text-align:center;top:99.5px;line-height:20px;font-size:12px;color:#333;">加</div><div class="t" style="left:1769px;width:57px;text-align:center;top:114.0px;line-height:20px;font-size:12px;color:#333;">载项</div><div class="t" style="left:1769px;width:57px;text-align:center;top:135.6px;line-height:20px;font-size:12px;color:#444;">加载项</div><div class="r" style="left:1826px;top:66px;width:1px;height:86px;background:#b9b9b9;"></div><svg class="s" style="left:1847px;top:72px;" width="28" height="22" viewBox="0 0 28 22"><circle cx="14" cy="7" r="5.5" fill="none" stroke="#3cb4ea" stroke-width="3.2"/><path d="M9 5.5 A5.5 5.5 0 0 1 19.2 5.8" fill="none" stroke="#e84a6a" stroke-width="3.2"/><circle cx="6.5" cy="14" r="5" fill="none" stroke="#3cb4ea" stroke-width="3.2"/><circle cx="21.5" cy="14" r="5" fill="none" stroke="#2aa4e8" stroke-width="3.2"/></svg><div class="t" style="left:1827px;width:68px;text-align:center;top:100.0px;line-height:20px;font-size:12px;color:#333;">保存到</div><div class="t" style="left:1827px;width:68px;text-align:center;top:114.5px;line-height:20px;font-size:12px;color:#333;">百度网盘</div><div class="t" style="left:1827px;width:68px;text-align:center;top:135.6px;line-height:20px;font-size:12px;color:#444;">保存</div><div class="r" style="left:1895px;top:66px;width:1px;height:86px;background:#b9b9b9;"></div><svg class="s" style="left:1907px;top:146px;" width="13" height="7" viewBox="0 0 13 7"><path d="M1 6.5 L6.5 1 L12 6.5" fill="none" stroke="#555" stroke-width="1.2"/></svg><div class="r" style="left:6px;top:157px;width:1920px;height:30px;background:#fbf3bd;border-top:1px solid #b98f12;border-bottom:1px solid #b98f12;box-sizing:border-box;"></div><svg class="s" style="left:15px;top:161px;" width="22" height="22" viewBox="0 0 22 22"><circle cx="11" cy="11" r="11" fill="#4b7cb8"/><circle cx="11" cy="5.5" r="1.8" fill="#fff"/><rect x="9.5" y="8.5" width="3" height="9" fill="#fff"/></svg><div class="t" style="left:46px;top:160.5px;line-height:20px;font-size:12px;color:#333;font-weight:700;">获取正版 OFFICE</div><div class="t" style="left:151px;top:160.5px;line-height:20px;font-size:12px;color:#333;">你的许可证并非正版，你可能是盗版软件的受害者。立即通过正版 Office 避免中断并使文件保持安全。</div><div class="r" style="left:707px;top:160px;width:119px;height:23px;background:#fff;border:1px solid #ababab;box-sizing:border-box;"></div><div class="t" style="left:707px;width:119px;text-align:center;top:161.5px;line-height:20px;font-size:12px;color:#333;">获取正版 Office</div><div class="r" style="left:836px;top:160px;width:106px;height:23px;background:#fff;border:1px solid #ababab;box-sizing:border-box;"></div><div class="t" style="left:836px;width:106px;text-align:center;top:161.5px;line-height:20px;font-size:12px;color:#333;">了解详细信息</div><svg class="s" style="left:1905px;top:168px;" width="9" height="9" viewBox="0 0 9 9"><path d="M0.5 0.5 L8.5 8.5 M8.5 0.5 L0.5 8.5" stroke="#444" stroke-width="1.1"/></svg><div class="r" style="left:6px;top:187px;width:314px;height:829px;background:#e6e6e6;"></div><div class="r" style="left:320px;top:187px;width:1px;height:829px;background:#c9c9c9;"></div><div class="t" style="left:20px;top:200.7px;line-height:24px;font-size:20px;color:#333;">导航</div><svg class="s" style="left:249px;top:207px;" width="14" height="8" viewBox="0 0 14 8"><path d="M0.5 0.5 L7 7 L13.5 0.5" fill="none" stroke="#444" stroke-width="1.2"/></svg><svg class="s" style="left:292px;top:205px;" width="11" height="11" viewBox="0 0 11 11"><path d="M0.5 0.5 L10.5 10.5 M10.5 0.5 L0.5 10.5" stroke="#444" stroke-width="1.2"/></svg><div class="r" style="left:20px;top:243px;width:282px;height:26px;background:#fff;border:1px solid #b9b9b9;box-sizing:border-box;"></div><div class="t" style="left:27px;top:245.5px;line-height:20px;font-size:12px;color:#707070;">在文档中搜索</div><svg class="s" style="left:274px;top:248px;" width="15" height="15" viewBox="0 0 15 15"><circle cx="9.5" cy="5.5" r="4.2" fill="none" stroke="#2b579a" stroke-width="1.9"/><path d="M6.5 8.5 L1.5 13.5" stroke="#2b579a" stroke-width="2.4"/></svg><svg class="s" style="left:293px;top:254.25px;" width="7" height="4.5" viewBox="0 0 7 4.5"><path d="M1 1 L3.5 3.5 L6 1" fill="none" stroke="#444" stroke-width="1.2"/></svg><div class="t" style="left:20px;top:285.0px;line-height:20px;font-size:12px;color:#2b579a;font-weight:700;">标题</div><div class="t" style="left:70px;top:285.0px;line-height:20px;font-size:12px;color:#444;">页面</div><div class="t" style="left:119px;top:285.0px;line-height:20px;font-size:12px;color:#444;">结果</div><div class="r" style="left:20px;top:309px;width:26px;height:3px;background:#2b579a;"></div><div class="t" style="left:20px;top:334.0px;line-height:20px;font-size:12px;color:#444;">创建文档的交互式大纲。</div><div class="t" style="left:20px;top:364.5px;line-height:20px;font-size:12px;color:#444;">它是跟踪具体位置或快速移动内容的好方式。</div><div class="t" style="left:20px;top:394.5px;line-height:20px;font-size:12px;color:#444;">若要开始，请转到“开始”选项卡，并向文档中的标题</div><div class="t" style="left:20px;top:409.5px;line-height:20px;font-size:12px;color:#444;">应用标题样式。</div><div class="r" style="left:321px;top:187px;width:1605px;height:829px;background:#e6e6e6;"></div><div class="r" style="left:321px;top:188px;width:29px;height:26px;background:#dadada;"></div><div class="r" style="left:325px;top:191px;width:21px;height:19px;background:#fff;"></div><svg class="s" style="left:331px;top:197px;" width="8" height="8" viewBox="0 0 8 8"><path d="M1 0 V6.5 H7.5" fill="none" stroke="#555" stroke-width="1.8"/></svg><div class="r" style="left:679px;top:192px;width:900px;height:16px;background:#c6c6c6;"></div><div class="r" style="left:752px;top:192px;width:760px;height:16px;background:#fff;"></div><div class="t" style="left:680.8px;width:20.0px;text-align:center;top:194.0px;line-height:14px;font-size:10px;color:#555;">6</div><div class="t" style="left:702.2px;width:20.0px;text-align:center;top:194.0px;line-height:14px;font-size:10px;color:#555;">4</div><div class="t" style="left:723.6px;width:20.0px;text-align:center;top:194.0px;line-height:14px;font-size:10px;color:#555;">2</div><div class="t" style="left:766.4px;width:20.0px;text-align:center;top:194.0px;line-height:14px;font-size:10px;color:#555;">2</div><div class="t" style="left:787.8px;width:20.0px;text-align:center;top:194.0px;line-height:14px;font-size:10px;color:#555;">4</div><div class="t" style="left:809.2px;width:20.0px;text-align:center;top:194.0px;line-height:14px;font-size:10px;color:#555;">6</div><div class="t" style="left:830.6px;width:20.0px;text-align:center;top:194.0px;line-height:14px;font-size:10px;color:#555;">8</div><div class="t" style="left:852.0px;width:20.0px;text-align:center;top:194.0px;line-height:14px;font-size:10px;color:#555;">10</div><div class="t" style="left:873.4px;width:20.0px;text-align:center;top:194.0px;line-height:14px;font-size:10px;color:#555;">12</div><div class="t" style="left:894.8px;width:20.0px;text-align:center;top:194.0px;line-height:14px;font-size:10px;color:#555;">14</div><div class="t" style="left:916.2px;width:20.0px;text-align:center;top:194.0px;line-height:14px;font-size:10px;color:#555;">16</div><div class="t" style="left:937.6px;width:20.0px;text-align:center;top:194.0px;line-height:14px;font-size:10px;color:#555;">18</div><div class="t" style="left:959.0px;width:20.0px;text-align:center;top:194.0px;line-height:14px;font-size:10px;color:#555;">20</div><div class="t" style="left:980.4px;width:20.0px;text-align:center;top:194.0px;line-height:14px;font-size:10px;color:#555;">22</div><div class="t" style="left:1001.8px;width:20.0px;text-align:center;top:194.0px;line-height:14px;font-size:10px;color:#555;">24</div><div class="t" style="left:1023.2px;width:20.0px;text-align:center;top:194.0px;line-height:14px;font-size:10px;color:#555;">26</div><div class="t" style="left:1044.6px;width:20.0px;text-align:center;top:194.0px;line-height:14px;font-size:10px;color:#555;">28</div><div class="t" style="left:1066.0px;width:20.0px;text-align:center;top:194.0px;line-height:14px;font-size:10px;color:#555;">30</div><div class="t" style="left:1087.4px;width:20.0px;text-align:center;top:194.0px;line-height:14px;font-size:10px;color:#555;">32</div><div class="t" style="left:1108.8px;width:20.0px;text-align:center;top:194.0px;line-height:14px;font-size:10px;color:#555;">34</div><div class="t" style="left:1130.2px;width:20.0px;text-align:center;top:194.0px;line-height:14px;font-size:10px;color:#555;">36</div><div class="t" style="left:1151.6px;width:20.0px;text-align:center;top:194.0px;line-height:14px;font-size:10px;color:#555;">38</div><div class="t" style="left:1173.0px;width:20.0px;text-align:center;top:194.0px;line-height:14px;font-size:10px;color:#555;">40</div><div class="t" style="left:1194.4px;width:20.0px;text-align:center;top:194.0px;line-height:14px;font-size:10px;color:#555;">42</div><div class="t" style="left:1215.8px;width:20.0px;text-align:center;top:194.0px;line-height:14px;font-size:10px;color:#555;">44</div><div class="t" style="left:1237.2px;width:20.0px;text-align:center;top:194.0px;line-height:14px;font-size:10px;color:#555;">46</div><div class="t" style="left:1258.6px;width:20.0px;text-align:center;top:194.0px;line-height:14px;font-size:10px;color:#555;">48</div><div class="t" style="left:1280.0px;width:20.0px;text-align:center;top:194.0px;line-height:14px;font-size:10px;color:#555;">50</div><div class="t" style="left:1301.4px;width:20.0px;text-align:center;top:194.0px;line-height:14px;font-size:10px;color:#555;">52</div><div class="t" style="left:1322.8px;width:20.0px;text-align:center;top:194.0px;line-height:14px;font-size:10px;color:#555;">54</div><div class="t" style="left:1344.1999999999998px;width:20.0px;text-align:center;top:194.0px;line-height:14px;font-size:10px;color:#555;">56</div><div class="t" style="left:1365.6px;width:20.0px;text-align:center;top:194.0px;line-height:14px;font-size:10px;color:#555;">58</div><div class="t" style="left:1387.0px;width:20.0px;text-align:center;top:194.0px;line-height:14px;font-size:10px;color:#555;">60</div><div class="t" style="left:1408.4px;width:20.0px;text-align:center;top:194.0px;line-height:14px;font-size:10px;color:#555;">62</div><div class="t" style="left:1429.8px;width:20.0px;text-align:center;top:194.0px;line-height:14px;font-size:10px;color:#555;">64</div><div class="t" style="left:1451.1999999999998px;width:20.0px;text-align:center;top:194.0px;line-height:14px;font-size:10px;color:#555;">66</div><div class="t" style="left:1472.6px;width:20.0px;text-align:center;top:194.0px;line-height:14px;font-size:10px;color:#555;">68</div><div class="t" style="left:1494.0px;width:20.0px;text-align:center;top:194.0px;line-height:14px;font-size:10px;color:#555;">70</div><div class="t" style="left:1515.4px;width:20.0px;text-align:center;top:194.0px;line-height:14px;font-size:10px;color:#555;">72</div><div class="t" style="left:1536.8px;width:20.0px;text-align:center;top:194.0px;line-height:14px;font-size:10px;color:#555;">74</div><div class="t" style="left:1558.1999999999998px;width:20.0px;text-align:center;top:194.0px;line-height:14px;font-size:10px;color:#555;">76</div><svg class="s" style="left:741px;top:192px;" width="11" height="16" viewBox="0 0 11 16"><rect x="0" y="0" width="11" height="16" fill="#c6c6c6"/><rect x="0.5" y="2.5" width="10" height="11" fill="#777"/><rect x="1" y="3" width="1" height="1" fill="#e8e8e8"/><rect x="1" y="5" width="1" height="1" fill="#e8e8e8"/><rect x="1" y="7" width="1" height="1" fill="#e8e8e8"/><rect x="1" y="9" width="1" height="1" fill="#e8e8e8"/><rect x="1" y="11" width="1" height="1" fill="#e8e8e8"/><rect x="1" y="13" width="1" height="1" fill="#e8e8e8"/><rect x="3" y="3" width="1" height="1" fill="#e8e8e8"/><rect x="3" y="5" width="1" height="1" fill="#e8e8e8"/><rect x="3" y="7" width="1" height="1" fill="#e8e8e8"/><rect x="3" y="9" width="1" height="1" fill="#e8e8e8"/><rect x="3" y="11" width="1" height="1" fill="#e8e8e8"/><rect x="3" y="13" width="1" height="1" fill="#e8e8e8"/><rect x="5" y="3" width="1" height="1" fill="#e8e8e8"/><rect x="5" y="5" width="1" height="1" fill="#e8e8e8"/><rect x="5" y="7" width="1" height="1" fill="#e8e8e8"/><rect x="5" y="9" width="1" height="1" fill="#e8e8e8"/><rect x="5" y="11" width="1" height="1" fill="#e8e8e8"/><rect x="5" y="13" width="1" height="1" fill="#e8e8e8"/><rect x="7" y="3" width="1" height="1" fill="#e8e8e8"/><rect x="7" y="5" width="1" height="1" fill="#e8e8e8"/><rect x="7" y="7" width="1" height="1" fill="#e8e8e8"/><rect x="7" y="9" width="1" height="1" fill="#e8e8e8"/><rect x="7" y="11" width="1" height="1" fill="#e8e8e8"/><rect x="7" y="13" width="1" height="1" fill="#e8e8e8"/><rect x="9" y="3" width="1" height="1" fill="#e8e8e8"/><rect x="9" y="5" width="1" height="1" fill="#e8e8e8"/><rect x="9" y="7" width="1" height="1" fill="#e8e8e8"/><rect x="9" y="9" width="1" height="1" fill="#e8e8e8"/><rect x="9" y="11" width="1" height="1" fill="#e8e8e8"/><rect x="9" y="13" width="1" height="1" fill="#e8e8e8"/></svg><svg class="s" style="left:781px;top:192px;" width="11" height="16" viewBox="0 0 11 16"><rect x="0" y="0" width="11" height="16" fill="#c6c6c6"/><rect x="0.5" y="2.5" width="10" height="11" fill="#777"/><rect x="1" y="3" width="1" height="1" fill="#e8e8e8"/><rect x="1" y="5" width="1" height="1" fill="#e8e8e8"/><rect x="1" y="7" width="1" height="1" fill="#e8e8e8"/><rect x="1" y="9" width="1" height="1" fill="#e8e8e8"/><rect x="1" y="11" width="1" height="1" fill="#e8e8e8"/><rect x="1" y="13" width="1" height="1" fill="#e8e8e8"/><rect x="3" y="3" width="1" height="1" fill="#e8e8e8"/><rect x="3" y="5" width="1" height="1" fill="#e8e8e8"/><rect x="3" y="7" width="1" height="1" fill="#e8e8e8"/><rect x="3" y="9" width="1" height="1" fill="#e8e8e8"/><rect x="3" y="11" width="1" height="1" fill="#e8e8e8"/><rect x="3" y="13" width="1" height="1" fill="#e8e8e8"/><rect x="5" y="3" width="1" height="1" fill="#e8e8e8"/><rect x="5" y="5" width="1" height="1" fill="#e8e8e8"/><rect x="5" y="7" width="1" height="1" fill="#e8e8e8"/><rect x="5" y="9" width="1" height="1" fill="#e8e8e8"/><rect x="5" y="11" width="1" height="1" fill="#e8e8e8"/><rect x="5" y="13" width="1" height="1" fill="#e8e8e8"/><rect x="7" y="3" width="1" height="1" fill="#e8e8e8"/><rect x="7" y="5" width="1" height="1" fill="#e8e8e8"/><rect x="7" y="7" width="1" height="1" fill="#e8e8e8"/><rect x="7" y="9" width="1" height="1" fill="#e8e8e8"/><rect x="7" y="11" width="1" height="1" fill="#e8e8e8"/><rect x="7" y="13" width="1" height="1" fill="#e8e8e8"/><rect x="9" y="3" width="1" height="1" fill="#e8e8e8"/><rect x="9" y="5" width="1" height="1" fill="#e8e8e8"/><rect x="9" y="7" width="1" height="1" fill="#e8e8e8"/><rect x="9" y="9" width="1" height="1" fill="#e8e8e8"/><rect x="9" y="11" width="1" height="1" fill="#e8e8e8"/><rect x="9" y="13" width="1" height="1" fill="#e8e8e8"/></svg><svg class="s" style="left:860px;top:192px;" width="11" height="16" viewBox="0 0 11 16"><rect x="0" y="0" width="11" height="16" fill="#c6c6c6"/><rect x="0.5" y="2.5" width="10" height="11" fill="#777"/><rect x="1" y="3" width="1" height="1" fill="#e8e8e8"/><rect x="1" y="5" width="1" height="1" fill="#e8e8e8"/><rect x="1" y="7" width="1" height="1" fill="#e8e8e8"/><rect x="1" y="9" width="1" height="1" fill="#e8e8e8"/><rect x="1" y="11" width="1" height="1" fill="#e8e8e8"/><rect x="1" y="13" width="1" height="1" fill="#e8e8e8"/><rect x="3" y="3" width="1" height="1" fill="#e8e8e8"/><rect x="3" y="5" width="1" height="1" fill="#e8e8e8"/><rect x="3" y="7" width="1" height="1" fill="#e8e8e8"/><rect x="3" y="9" width="1" height="1" fill="#e8e8e8"/><rect x="3" y="11" width="1" height="1" fill="#e8e8e8"/><rect x="3" y="13" width="1" height="1" fill="#e8e8e8"/><rect x="5" y="3" width="1" height="1" fill="#e8e8e8"/><rect x="5" y="5" width="1" height="1" fill="#e8e8e8"/><rect x="5" y="7" width="1" height="1" fill="#e8e8e8"/><rect x="5" y="9" width="1" height="1" fill="#e8e8e8"/><rect x="5" y="11" width="1" height="1" fill="#e8e8e8"/><rect x="5" y="13" width="1" height="1" fill="#e8e8e8"/><rect x="7" y="3" width="1" height="1" fill="#e8e8e8"/><rect x="7" y="5" width="1" height="1" fill="#e8e8e8"/><rect x="7" y="7" width="1" height="1" fill="#e8e8e8"/><rect x="7" y="9" width="1" height="1" fill="#e8e8e8"/><rect x="7" y="11" width="1" height="1" fill="#e8e8e8"/><rect x="7" y="13" width="1" height="1" fill="#e8e8e8"/><rect x="9" y="3" width="1" height="1" fill="#e8e8e8"/><rect x="9" y="5" width="1" height="1" fill="#e8e8e8"/><rect x="9" y="7" width="1" height="1" fill="#e8e8e8"/><rect x="9" y="9" width="1" height="1" fill="#e8e8e8"/><rect x="9" y="11" width="1" height="1" fill="#e8e8e8"/><rect x="9" y="13" width="1" height="1" fill="#e8e8e8"/></svg><svg class="s" style="left:947px;top:192px;" width="11" height="16" viewBox="0 0 11 16"><rect x="0" y="0" width="11" height="16" fill="#c6c6c6"/><rect x="0.5" y="2.5" width="10" height="11" fill="#777"/><rect x="1" y="3" width="1" height="1" fill="#e8e8e8"/><rect x="1" y="5" width="1" height="1" fill="#e8e8e8"/><rect x="1" y="7" width="1" height="1" fill="#e8e8e8"/><rect x="1" y="9" width="1" height="1" fill="#e8e8e8"/><rect x="1" y="11" width="1" height="1" fill="#e8e8e8"/><rect x="1" y="13" width="1" height="1" fill="#e8e8e8"/><rect x="3" y="3" width="1" height="1" fill="#e8e8e8"/><rect x="3" y="5" width="1" height="1" fill="#e8e8e8"/><rect x="3" y="7" width="1" height="1" fill="#e8e8e8"/><rect x="3" y="9" width="1" height="1" fill="#e8e8e8"/><rect x="3" y="11" width="1" height="1" fill="#e8e8e8"/><rect x="3" y="13" width="1" height="1" fill="#e8e8e8"/><rect x="5" y="3" width="1" height="1" fill="#e8e8e8"/><rect x="5" y="5" width="1" height="1" fill="#e8e8e8"/><rect x="5" y="7" width="1" height="1" fill="#e8e8e8"/><rect x="5" y="9" width="1" height="1" fill="#e8e8e8"/><rect x="5" y="11" width="1" height="1" fill="#e8e8e8"/><rect x="5" y="13" width="1" height="1" fill="#e8e8e8"/><rect x="7" y="3" width="1" height="1" fill="#e8e8e8"/><rect x="7" y="5" width="1" height="1" fill="#e8e8e8"/><rect x="7" y="7" width="1" height="1" fill="#e8e8e8"/><rect x="7" y="9" width="1" height="1" fill="#e8e8e8"/><rect x="7" y="11" width="1" height="1" fill="#e8e8e8"/><rect x="7" y="13" width="1" height="1" fill="#e8e8e8"/><rect x="9" y="3" width="1" height="1" fill="#e8e8e8"/><rect x="9" y="5" width="1" height="1" fill="#e8e8e8"/><rect x="9" y="7" width="1" height="1" fill="#e8e8e8"/><rect x="9" y="9" width="1" height="1" fill="#e8e8e8"/><rect x="9" y="11" width="1" height="1" fill="#e8e8e8"/><rect x="9" y="13" width="1" height="1" fill="#e8e8e8"/></svg><svg class="s" style="left:1030px;top:192px;" width="11" height="16" viewBox="0 0 11 16"><rect x="0" y="0" width="11" height="16" fill="#c6c6c6"/><rect x="0.5" y="2.5" width="10" height="11" fill="#777"/><rect x="1" y="3" width="1" height="1" fill="#e8e8e8"/><rect x="1" y="5" width="1" height="1" fill="#e8e8e8"/><rect x="1" y="7" width="1" height="1" fill="#e8e8e8"/><rect x="1" y="9" width="1" height="1" fill="#e8e8e8"/><rect x="1" y="11" width="1" height="1" fill="#e8e8e8"/><rect x="1" y="13" width="1" height="1" fill="#e8e8e8"/><rect x="3" y="3" width="1" height="1" fill="#e8e8e8"/><rect x="3" y="5" width="1" height="1" fill="#e8e8e8"/><rect x="3" y="7" width="1" height="1" fill="#e8e8e8"/><rect x="3" y="9" width="1" height="1" fill="#e8e8e8"/><rect x="3" y="11" width="1" height="1" fill="#e8e8e8"/><rect x="3" y="13" width="1" height="1" fill="#e8e8e8"/><rect x="5" y="3" width="1" height="1" fill="#e8e8e8"/><rect x="5" y="5" width="1" height="1" fill="#e8e8e8"/><rect x="5" y="7" width="1" height="1" fill="#e8e8e8"/><rect x="5" y="9" width="1" height="1" fill="#e8e8e8"/><rect x="5" y="11" width="1" height="1" fill="#e8e8e8"/><rect x="5" y="13" width="1" height="1" fill="#e8e8e8"/><rect x="7" y="3" width="1" height="1" fill="#e8e8e8"/><rect x="7" y="5" width="1" height="1" fill="#e8e8e8"/><rect x="7" y="7" width="1" height="1" fill="#e8e8e8"/><rect x="7" y="9" width="1" height="1" fill="#e8e8e8"/><rect x="7" y="11" width="1" height="1" fill="#e8e8e8"/><rect x="7" y="13" width="1" height="1" fill="#e8e8e8"/><rect x="9" y="3" width="1" height="1" fill="#e8e8e8"/><rect x="9" y="5" width="1" height="1" fill="#e8e8e8"/><rect x="9" y="7" width="1" height="1" fill="#e8e8e8"/><rect x="9" y="9" width="1" height="1" fill="#e8e8e8"/><rect x="9" y="11" width="1" height="1" fill="#e8e8e8"/><rect x="9" y="13" width="1" height="1" fill="#e8e8e8"/></svg><svg class="s" style="left:1136px;top:192px;" width="11" height="16" viewBox="0 0 11 16"><rect x="0" y="0" width="11" height="16" fill="#c6c6c6"/><rect x="0.5" y="2.5" width="10" height="11" fill="#777"/><rect x="1" y="3" width="1" height="1" fill="#e8e8e8"/><rect x="1" y="5" width="1" height="1" fill="#e8e8e8"/><rect x="1" y="7" width="1" height="1" fill="#e8e8e8"/><rect x="1" y="9" width="1" height="1" fill="#e8e8e8"/><rect x="1" y="11" width="1" height="1" fill="#e8e8e8"/><rect x="1" y="13" width="1" height="1" fill="#e8e8e8"/><rect x="3" y="3" width="1" height="1" fill="#e8e8e8"/><rect x="3" y="5" width="1" height="1" fill="#e8e8e8"/><rect x="3" y="7" width="1" height="1" fill="#e8e8e8"/><rect x="3" y="9" width="1" height="1" fill="#e8e8e8"/><rect x="3" y="11" width="1" height="1" fill="#e8e8e8"/><rect x="3" y="13" width="1" height="1" fill="#e8e8e8"/><rect x="5" y="3" width="1" height="1" fill="#e8e8e8"/><rect x="5" y="5" width="1" height="1" fill="#e8e8e8"/><rect x="5" y="7" width="1" height="1" fill="#e8e8e8"/><rect x="5" y="9" width="1" height="1" fill="#e8e8e8"/><rect x="5" y="11" width="1" height="1" fill="#e8e8e8"/><rect x="5" y="13" width="1" height="1" fill="#e8e8e8"/><rect x="7" y="3" width="1" height="1" fill="#e8e8e8"/><rect x="7" y="5" width="1" height="1" fill="#e8e8e8"/><rect x="7" y="7" width="1" height="1" fill="#e8e8e8"/><rect x="7" y="9" width="1" height="1" fill="#e8e8e8"/><rect x="7" y="11" width="1" height="1" fill="#e8e8e8"/><rect x="7" y="13" width="1" height="1" fill="#e8e8e8"/><rect x="9" y="3" width="1" height="1" fill="#e8e8e8"/><rect x="9" y="5" width="1" height="1" fill="#e8e8e8"/><rect x="9" y="7" width="1" height="1" fill="#e8e8e8"/><rect x="9" y="9" width="1" height="1" fill="#e8e8e8"/><rect x="9" y="11" width="1" height="1" fill="#e8e8e8"/><rect x="9" y="13" width="1" height="1" fill="#e8e8e8"/></svg><svg class="s" style="left:1198px;top:192px;" width="11" height="16" viewBox="0 0 11 16"><rect x="0" y="0" width="11" height="16" fill="#c6c6c6"/><rect x="0.5" y="2.5" width="10" height="11" fill="#777"/><rect x="1" y="3" width="1" height="1" fill="#e8e8e8"/><rect x="1" y="5" width="1" height="1" fill="#e8e8e8"/><rect x="1" y="7" width="1" height="1" fill="#e8e8e8"/><rect x="1" y="9" width="1" height="1" fill="#e8e8e8"/><rect x="1" y="11" width="1" height="1" fill="#e8e8e8"/><rect x="1" y="13" width="1" height="1" fill="#e8e8e8"/><rect x="3" y="3" width="1" height="1" fill="#e8e8e8"/><rect x="3" y="5" width="1" height="1" fill="#e8e8e8"/><rect x="3" y="7" width="1" height="1" fill="#e8e8e8"/><rect x="3" y="9" width="1" height="1" fill="#e8e8e8"/><rect x="3" y="11" width="1" height="1" fill="#e8e8e8"/><rect x="3" y="13" width="1" height="1" fill="#e8e8e8"/><rect x="5" y="3" width="1" height="1" fill="#e8e8e8"/><rect x="5" y="5" width="1" height="1" fill="#e8e8e8"/><rect x="5" y="7" width="1" height="1" fill="#e8e8e8"/><rect x="5" y="9" width="1" height="1" fill="#e8e8e8"/><rect x="5" y="11" width="1" height="1" fill="#e8e8e8"/><rect x="5" y="13" width="1" height="1" fill="#e8e8e8"/><rect x="7" y="3" width="1" height="1" fill="#e8e8e8"/><rect x="7" y="5" width="1" height="1" fill="#e8e8e8"/><rect x="7" y="7" width="1" height="1" fill="#e8e8e8"/><rect x="7" y="9" width="1" height="1" fill="#e8e8e8"/><rect x="7" y="11" width="1" height="1" fill="#e8e8e8"/><rect x="7" y="13" width="1" height="1" fill="#e8e8e8"/><rect x="9" y="3" width="1" height="1" fill="#e8e8e8"/><rect x="9" y="5" width="1" height="1" fill="#e8e8e8"/><rect x="9" y="7" width="1" height="1" fill="#e8e8e8"/><rect x="9" y="9" width="1" height="1" fill="#e8e8e8"/><rect x="9" y="11" width="1" height="1" fill="#e8e8e8"/><rect x="9" y="13" width="1" height="1" fill="#e8e8e8"/></svg><svg class="s" style="left:1288px;top:192px;" width="11" height="16" viewBox="0 0 11 16"><rect x="0" y="0" width="11" height="16" fill="#c6c6c6"/><rect x="0.5" y="2.5" width="10" height="11" fill="#777"/><rect x="1" y="3" width="1" height="1" fill="#e8e8e8"/><rect x="1" y="5" width="1" height="1" fill="#e8e8e8"/><rect x="1" y="7" width="1" height="1" fill="#e8e8e8"/><rect x="1" y="9" width="1" height="1" fill="#e8e8e8"/><rect x="1" y="11" width="1" height="1" fill="#e8e8e8"/><rect x="1" y="13" width="1" height="1" fill="#e8e8e8"/><rect x="3" y="3" width="1" height="1" fill="#e8e8e8"/><rect x="3" y="5" width="1" height="1" fill="#e8e8e8"/><rect x="3" y="7" width="1" height="1" fill="#e8e8e8"/><rect x="3" y="9" width="1" height="1" fill="#e8e8e8"/><rect x="3" y="11" width="1" height="1" fill="#e8e8e8"/><rect x="3" y="13" width="1" height="1" fill="#e8e8e8"/><rect x="5" y="3" width="1" height="1" fill="#e8e8e8"/><rect x="5" y="5" width="1" height="1" fill="#e8e8e8"/><rect x="5" y="7" width="1" height="1" fill="#e8e8e8"/><rect x="5" y="9" width="1" height="1" fill="#e8e8e8"/><rect x="5" y="11" width="1" height="1" fill="#e8e8e8"/><rect x="5" y="13" width="1" height="1" fill="#e8e8e8"/><rect x="7" y="3" width="1" height="1" fill="#e8e8e8"/><rect x="7" y="5" width="1" height="1" fill="#e8e8e8"/><rect x="7" y="7" width="1" height="1" fill="#e8e8e8"/><rect x="7" y="9" width="1" height="1" fill="#e8e8e8"/><rect x="7" y="11" width="1" height="1" fill="#e8e8e8"/><rect x="7" y="13" width="1" height="1" fill="#e8e8e8"/><rect x="9" y="3" width="1" height="1" fill="#e8e8e8"/><rect x="9" y="5" width="1" height="1" fill="#e8e8e8"/><rect x="9" y="7" width="1" height="1" fill="#e8e8e8"/><rect x="9" y="9" width="1" height="1" fill="#e8e8e8"/><rect x="9" y="11" width="1" height="1" fill="#e8e8e8"/><rect x="9" y="13" width="1" height="1" fill="#e8e8e8"/></svg><svg class="s" style="left:1349px;top:192px;" width="11" height="16" viewBox="0 0 11 16"><rect x="0" y="0" width="11" height="16" fill="#c6c6c6"/><rect x="0.5" y="2.5" width="10" height="11" fill="#777"/><rect x="1" y="3" width="1" height="1" fill="#e8e8e8"/><rect x="1" y="5" width="1" height="1" fill="#e8e8e8"/><rect x="1" y="7" width="1" height="1" fill="#e8e8e8"/><rect x="1" y="9" width="1" height="1" fill="#e8e8e8"/><rect x="1" y="11" width="1" height="1" fill="#e8e8e8"/><rect x="1" y="13" width="1" height="1" fill="#e8e8e8"/><rect x="3" y="3" width="1" height="1" fill="#e8e8e8"/><rect x="3" y="5" width="1" height="1" fill="#e8e8e8"/><rect x="3" y="7" width="1" height="1" fill="#e8e8e8"/><rect x="3" y="9" width="1" height="1" fill="#e8e8e8"/><rect x="3" y="11" width="1" height="1" fill="#e8e8e8"/><rect x="3" y="13" width="1" height="1" fill="#e8e8e8"/><rect x="5" y="3" width="1" height="1" fill="#e8e8e8"/><rect x="5" y="5" width="1" height="1" fill="#e8e8e8"/><rect x="5" y="7" width="1" height="1" fill="#e8e8e8"/><rect x="5" y="9" width="1" height="1" fill="#e8e8e8"/><rect x="5" y="11" width="1" height="1" fill="#e8e8e8"/><rect x="5" y="13" width="1" height="1" fill="#e8e8e8"/><rect x="7" y="3" width="1" height="1" fill="#e8e8e8"/><rect x="7" y="5" width="1" height="1" fill="#e8e8e8"/><rect x="7" y="7" width="1" height="1" fill="#e8e8e8"/><rect x="7" y="9" width="1" height="1" fill="#e8e8e8"/><rect x="7" y="11" width="1" height="1" fill="#e8e8e8"/><rect x="7" y="13" width="1" height="1" fill="#e8e8e8"/><rect x="9" y="3" width="1" height="1" fill="#e8e8e8"/><rect x="9" y="5" width="1" height="1" fill="#e8e8e8"/><rect x="9" y="7" width="1" height="1" fill="#e8e8e8"/><rect x="9" y="9" width="1" height="1" fill="#e8e8e8"/><rect x="9" y="11" width="1" height="1" fill="#e8e8e8"/><rect x="9" y="13" width="1" height="1" fill="#e8e8e8"/></svg><svg class="s" style="left:1412px;top:192px;" width="11" height="16" viewBox="0 0 11 16"><rect x="0" y="0" width="11" height="16" fill="#c6c6c6"/><rect x="0.5" y="2.5" width="10" height="11" fill="#777"/><rect x="1" y="3" width="1" height="1" fill="#e8e8e8"/><rect x="1" y="5" width="1" height="1" fill="#e8e8e8"/><rect x="1" y="7" width="1" height="1" fill="#e8e8e8"/><rect x="1" y="9" width="1" height="1" fill="#e8e8e8"/><rect x="1" y="11" width="1" height="1" fill="#e8e8e8"/><rect x="1" y="13" width="1" height="1" fill="#e8e8e8"/><rect x="3" y="3" width="1" height="1" fill="#e8e8e8"/><rect x="3" y="5" width="1" height="1" fill="#e8e8e8"/><rect x="3" y="7" width="1" height="1" fill="#e8e8e8"/><rect x="3" y="9" width="1" height="1" fill="#e8e8e8"/><rect x="3" y="11" width="1" height="1" fill="#e8e8e8"/><rect x="3" y="13" width="1" height="1" fill="#e8e8e8"/><rect x="5" y="3" width="1" height="1" fill="#e8e8e8"/><rect x="5" y="5" width="1" height="1" fill="#e8e8e8"/><rect x="5" y="7" width="1" height="1" fill="#e8e8e8"/><rect x="5" y="9" width="1" height="1" fill="#e8e8e8"/><rect x="5" y="11" width="1" height="1" fill="#e8e8e8"/><rect x="5" y="13" width="1" height="1" fill="#e8e8e8"/><rect x="7" y="3" width="1" height="1" fill="#e8e8e8"/><rect x="7" y="5" width="1" height="1" fill="#e8e8e8"/><rect x="7" y="7" width="1" height="1" fill="#e8e8e8"/><rect x="7" y="9" width="1" height="1" fill="#e8e8e8"/><rect x="7" y="11" width="1" height="1" fill="#e8e8e8"/><rect x="7" y="13" width="1" height="1" fill="#e8e8e8"/><rect x="9" y="3" width="1" height="1" fill="#e8e8e8"/><rect x="9" y="5" width="1" height="1" fill="#e8e8e8"/><rect x="9" y="7" width="1" height="1" fill="#e8e8e8"/><rect x="9" y="9" width="1" height="1" fill="#e8e8e8"/><rect x="9" y="11" width="1" height="1" fill="#e8e8e8"/><rect x="9" y="13" width="1" height="1" fill="#e8e8e8"/></svg><svg class="s" style="left:1501px;top:192px;" width="11" height="16" viewBox="0 0 11 16"><rect x="0" y="0" width="11" height="16" fill="#c6c6c6"/><rect x="0.5" y="2.5" width="10" height="11" fill="#777"/><rect x="1" y="3" width="1" height="1" fill="#e8e8e8"/><rect x="1" y="5" width="1" height="1" fill="#e8e8e8"/><rect x="1" y="7" width="1" height="1" fill="#e8e8e8"/><rect x="1" y="9" width="1" height="1" fill="#e8e8e8"/><rect x="1" y="11" width="1" height="1" fill="#e8e8e8"/><rect x="1" y="13" width="1" height="1" fill="#e8e8e8"/><rect x="3" y="3" width="1" height="1" fill="#e8e8e8"/><rect x="3" y="5" width="1" height="1" fill="#e8e8e8"/><rect x="3" y="7" width="1" height="1" fill="#e8e8e8"/><rect x="3" y="9" width="1" height="1" fill="#e8e8e8"/><rect x="3" y="11" width="1" height="1" fill="#e8e8e8"/><rect x="3" y="13" width="1" height="1" fill="#e8e8e8"/><rect x="5" y="3" width="1" height="1" fill="#e8e8e8"/><rect x="5" y="5" width="1" height="1" fill="#e8e8e8"/><rect x="5" y="7" width="1" height="1" fill="#e8e8e8"/><rect x="5" y="9" width="1" height="1" fill="#e8e8e8"/><rect x="5" y="11" width="1" height="1" fill="#e8e8e8"/><rect x="5" y="13" width="1" height="1" fill="#e8e8e8"/><rect x="7" y="3" width="1" height="1" fill="#e8e8e8"/><rect x="7" y="5" width="1" height="1" fill="#e8e8e8"/><rect x="7" y="7" width="1" height="1" fill="#e8e8e8"/><rect x="7" y="9" width="1" height="1" fill="#e8e8e8"/><rect x="7" y="11" width="1" height="1" fill="#e8e8e8"/><rect x="7" y="13" width="1" height="1" fill="#e8e8e8"/><rect x="9" y="3" width="1" height="1" fill="#e8e8e8"/><rect x="9" y="5" width="1" height="1" fill="#e8e8e8"/><rect x="9" y="7" width="1" height="1" fill="#e8e8e8"/><rect x="9" y="9" width="1" height="1" fill="#e8e8e8"/><rect x="9" y="11" width="1" height="1" fill="#e8e8e8"/><rect x="9" y="13" width="1" height="1" fill="#e8e8e8"/></svg><svg class="s" style="left:749px;top:189px;" width="12" height="29" viewBox="0 0 12 29"><path d="M0.5 0.5 H10.5 V4.7 L5.5 9.9 L0.5 4.7 Z" fill="#fff" stroke="#8a8a8a" stroke-width="1"/><path d="M5.5 11.9 L10.5 17 V21.2 H0.5 V17 Z" fill="#fff" stroke="#8a8a8a" stroke-width="1"/><rect x="0.5" y="21.2" width="10" height="6.5" fill="#fff" stroke="#8a8a8a" stroke-width="1"/></svg><svg class="s" style="left:776px;top:202px;" width="11" height="9" viewBox="0 0 11 9"><path d="M0.5 8.5 V4.5 L5.5 0.5 L10.5 4.5 V8.5 Z" fill="#fff" stroke="#999" stroke-width="1"/></svg><div class="r" style="left:326px;top:297px;width:17px;height:638px;background:#c6c6c6;"></div><div class="r" style="left:326px;top:374px;width:17px;height:483px;background:#fff;"></div><div class="t" style="left:326px;top:301.0px;width:17px;height:14px;line-height:14px;text-align:center;font-size:10px;color:#555;transform:rotate(-90deg)">4</div><div class="t" style="left:326px;top:334.0px;width:17px;height:14px;line-height:14px;text-align:center;font-size:10px;color:#555;transform:rotate(-90deg)">2</div><div class="t" style="left:326px;top:400.0px;width:17px;height:14px;line-height:14px;text-align:center;font-size:10px;color:#555;transform:rotate(-90deg)">2</div><div class="t" style="left:326px;top:433.0px;width:17px;height:14px;line-height:14px;text-align:center;font-size:10px;color:#555;transform:rotate(-90deg)">4</div><div class="t" style="left:326px;top:466.0px;width:17px;height:14px;line-height:14px;text-align:center;font-size:10px;color:#555;transform:rotate(-90deg)">6</div><div class="t" style="left:326px;top:499.0px;width:17px;height:14px;line-height:14px;text-align:center;font-size:10px;color:#555;transform:rotate(-90deg)">8</div><div class="t" style="left:326px;top:532.0px;width:17px;height:14px;line-height:14px;text-align:center;font-size:10px;color:#555;transform:rotate(-90deg)">10</div><div class="t" style="left:326px;top:565.0px;width:17px;height:14px;line-height:14px;text-align:center;font-size:10px;color:#555;transform:rotate(-90deg)">12</div><div class="t" style="left:326px;top:598.0px;width:17px;height:14px;line-height:14px;text-align:center;font-size:10px;color:#555;transform:rotate(-90deg)">14</div><div class="t" style="left:326px;top:631.0px;width:17px;height:14px;line-height:14px;text-align:center;font-size:10px;color:#555;transform:rotate(-90deg)">16</div><div class="t" style="left:326px;top:664.0px;width:17px;height:14px;line-height:14px;text-align:center;font-size:10px;color:#555;transform:rotate(-90deg)">18</div><div class="t" style="left:326px;top:697.0px;width:17px;height:14px;line-height:14px;text-align:center;font-size:10px;color:#555;transform:rotate(-90deg)">20</div><div class="t" style="left:326px;top:730.0px;width:17px;height:14px;line-height:14px;text-align:center;font-size:10px;color:#555;transform:rotate(-90deg)">22</div><div class="t" style="left:326px;top:763.0px;width:17px;height:14px;line-height:14px;text-align:center;font-size:10px;color:#555;transform:rotate(-90deg)">24</div><div class="t" style="left:326px;top:796.0px;width:17px;height:14px;line-height:14px;text-align:center;font-size:10px;color:#555;transform:rotate(-90deg)">26</div><div class="t" style="left:326px;top:829.0px;width:17px;height:14px;line-height:14px;text-align:center;font-size:10px;color:#555;transform:rotate(-90deg)">28</div><div class="t" style="left:326px;top:862.0px;width:17px;height:14px;line-height:14px;text-align:center;font-size:10px;color:#555;transform:rotate(-90deg)">30</div><div class="t" style="left:326px;top:895.0px;width:17px;height:14px;line-height:14px;text-align:center;font-size:10px;color:#555;transform:rotate(-90deg)">32</div><div class="r" style="left:333px;top:316px;width:6px;height:1px;background:#555;"></div><div class="r" style="left:333px;top:333px;width:6px;height:1px;background:#555;"></div><div class="r" style="left:333px;top:349px;width:6px;height:1px;background:#555;"></div><div class="r" style="left:333px;top:366px;width:6px;height:1px;background:#555;"></div><div class="r" style="left:333px;top:382px;width:6px;height:1px;background:#555;"></div><div class="r" style="left:333px;top:399px;width:6px;height:1px;background:#555;"></div><div class="r" style="left:333px;top:415px;width:6px;height:1px;background:#555;"></div><div class="r" style="left:333px;top:432px;width:6px;height:1px;background:#555;"></div><div class="r" style="left:333px;top:448px;width:6px;height:1px;background:#555;"></div><div class="r" style="left:333px;top:465px;width:6px;height:1px;background:#555;"></div><div class="r" style="left:333px;top:481px;width:6px;height:1px;background:#555;"></div><div class="r" style="left:333px;top:498px;width:6px;height:1px;background:#555;"></div><div class="r" style="left:333px;top:514px;width:6px;height:1px;background:#555;"></div><div class="r" style="left:333px;top:531px;width:6px;height:1px;background:#555;"></div><div class="r" style="left:333px;top:547px;width:6px;height:1px;background:#555;"></div><div class="r" style="left:333px;top:564px;width:6px;height:1px;background:#555;"></div><div class="r" style="left:333px;top:580px;width:6px;height:1px;background:#555;"></div><div class="r" style="left:333px;top:597px;width:6px;height:1px;background:#555;"></div><div class="r" style="left:333px;top:613px;width:6px;height:1px;background:#555;"></div><div class="r" style="left:333px;top:630px;width:6px;height:1px;background:#555;"></div><div class="r" style="left:333px;top:646px;width:6px;height:1px;background:#555;"></div><div class="r" style="left:333px;top:663px;width:6px;height:1px;background:#555;"></div><div class="r" style="left:333px;top:679px;width:6px;height:1px;background:#555;"></div><div class="r" style="left:333px;top:696px;width:6px;height:1px;background:#555;"></div><div class="r" style="left:333px;top:712px;width:6px;height:1px;background:#555;"></div><div class="r" style="left:333px;top:729px;width:6px;height:1px;background:#555;"></div><div class="r" style="left:333px;top:745px;width:6px;height:1px;background:#555;"></div><div class="r" style="left:333px;top:762px;width:6px;height:1px;background:#555;"></div><div class="r" style="left:333px;top:778px;width:6px;height:1px;background:#555;"></div><div class="r" style="left:333px;top:795px;width:6px;height:1px;background:#555;"></div><div class="r" style="left:333px;top:811px;width:6px;height:1px;background:#555;"></div><div class="r" style="left:333px;top:828px;width:6px;height:1px;background:#555;"></div><div class="r" style="left:333px;top:844px;width:6px;height:1px;background:#555;"></div><div class="r" style="left:333px;top:861px;width:6px;height:1px;background:#555;"></div><div class="r" style="left:333px;top:877px;width:6px;height:1px;background:#555;"></div><div class="r" style="left:333px;top:894px;width:6px;height:1px;background:#555;"></div><div class="r" style="left:333px;top:910px;width:6px;height:1px;background:#555;"></div><div class="r" style="left:333px;top:927px;width:6px;height:1px;background:#555;"></div><div class="r" style="left:326px;top:423px;width:17px;height:7px;background:#c6c6c6;"></div><div class="r" style="left:326px;top:453px;width:17px;height:7px;background:#c6c6c6;"></div><div class="r" style="left:326px;top:486px;width:17px;height:7px;background:#c6c6c6;"></div><div class="r" style="left:326px;top:520px;width:17px;height:7px;background:#c6c6c6;"></div><div class="r" style="left:326px;top:554px;width:17px;height:7px;background:#c6c6c6;"></div><div class="r" style="left:326px;top:588px;width:17px;height:7px;background:#c6c6c6;"></div><div class="r" style="left:326px;top:622px;width:17px;height:7px;background:#c6c6c6;"></div><div class="r" style="left:326px;top:655px;width:17px;height:7px;background:#c6c6c6;"></div><div class="r" style="left:326px;top:736px;width:17px;height:7px;background:#c6c6c6;"></div><div class="r" style="left:680px;top:298px;width:900px;height:636px;background:#fff;border:1px solid #c6c6c6;box-sizing:border-box;"></div><div class="r" style="left:755px;top:356px;width:751px;height:1px;background:#888;"></div><div class="r" style="left:755px;top:354px;width:1px;height:18px;background:#9a9a9a;"></div><div class="r" style="left:737px;top:372px;width:19px;height:1px;background:#9a9a9a;"></div><div class="r" style="left:1505px;top:354px;width:1px;height:18px;background:#9a9a9a;"></div><div class="r" style="left:1505px;top:372px;width:19px;height:1px;background:#9a9a9a;"></div><div class="r" style="left:756px;top:858px;width:1px;height:19px;background:#9a9a9a;"></div><div class="r" style="left:737px;top:858px;width:20px;height:1px;background:#9a9a9a;"></div><div class="r" style="left:1505px;top:858px;width:1px;height:19px;background:#9a9a9a;"></div><div class="r" style="left:1505px;top:858px;width:19px;height:1px;background:#9a9a9a;"></div><div class="t" style="left:1127px;top:342.0px;line-height:12px;font-size:10px;color:#aaa;"><span style="color:#8c8c8c">↵</span></div><div class="t" style="left:757px;top:866.0px;line-height:12px;font-size:10px;color:#aaa;"><span style="color:#8c8c8c">↵</span></div><div class="t" style="left:779px;top:373.5px;line-height:20px;font-size:11px;color:#000;">附件 8：<span style="color:#8c8c8c">↵</span></div><div class="t" style="left:1002px;top:395.0px;line-height:24px;font-size:17px;color:#000;letter-spacing:1.2px;">销售业绩统计表（<u>2024 </u>年度）<span style="color:#8c8c8c">↵</span></div><div class="t" style="left:755px;top:428.5px;line-height:20px;font-size:11px;color:#000;">投标人名称：<span style="color:#8c8c8c">↵</span></div><div class="r" style="left:749px;top:454px;width:761px;height:1px;background:#000;"></div><div class="r" style="left:749px;top:489px;width:761px;height:1px;background:#000;"></div><div class="r" style="left:749px;top:522px;width:761px;height:1px;background:#000;"></div><div class="r" style="left:749px;top:556px;width:761px;height:1px;background:#000;"></div><div class="r" style="left:749px;top:591px;width:761px;height:1px;background:#000;"></div><div class="r" style="left:749px;top:624px;width:761px;height:1px;background:#000;"></div><div class="r" style="left:749px;top:657px;width:761px;height:1px;background:#000;"></div><div class="r" style="left:749px;top:454px;width:1px;height:204px;background:#000;"></div><div class="r" style="left:789px;top:454px;width:1px;height:170px;background:#000;"></div><div class="r" style="left:868px;top:454px;width:1px;height:170px;background:#000;"></div><div class="r" style="left:955px;top:454px;width:1px;height:170px;background:#000;"></div><div class="r" style="left:1038px;top:454px;width:1px;height:170px;background:#000;"></div><div class="r" style="left:1144px;top:454px;width:1px;height:203px;background:#000;"></div><div class="r" style="left:1206px;top:454px;width:1px;height:203px;background:#000;"></div><div class="r" style="left:1296px;top:454px;width:1px;height:203px;background:#000;"></div><div class="r" style="left:1357px;top:454px;width:1px;height:170px;background:#000;"></div><div class="r" style="left:1420px;top:454px;width:1px;height:170px;background:#000;"></div><div class="r" style="left:1509px;top:454px;width:1px;height:204px;background:#000;"></div><div class="t" style="left:752px;width:40px;text-align:center;top:461.5px;line-height:20px;font-size:11.5px;color:#000;">序号</div><div class="t" style="left:792px;width:79px;text-align:center;top:461.5px;line-height:20px;font-size:11.5px;color:#000;">产品名称<span style="color:#8c8c8c">↵</span></div><div class="t" style="left:871px;width:87px;text-align:center;top:461.5px;line-height:20px;font-size:11.5px;color:#000;">买方<span style="color:#8c8c8c">↵</span></div><div class="t" style="left:958px;width:83px;text-align:center;top:461.5px;line-height:20px;font-size:11.5px;color:#000;"><span style="text-decoration:underline wavy #4a7ebb;text-underline-offset:2px">物料组编码</span><span style="color:#8c8c8c">↵</span></div><div class="t" style="left:1041px;width:106px;text-align:center;top:461.5px;line-height:20px;font-size:11.5px;color:#000;">合同编号<span style="color:#8c8c8c">↵</span></div><div class="t" style="left:1146px;width:62px;text-align:center;top:454.5px;line-height:17px;font-size:11.5px;color:#000;">合同金额</div><div class="t" style="left:1146px;width:62px;text-align:center;top:471.5px;line-height:17px;font-size:11.5px;color:#000;">（万元）<span style="color:#8c8c8c">↵</span></div><div class="t" style="left:1208px;width:90px;text-align:center;top:454.5px;line-height:17px;font-size:11.5px;color:#000;">发票开具金额</div><div class="t" style="left:1208px;width:90px;text-align:center;top:471.5px;line-height:17px;font-size:11.5px;color:#000;">（万元）<span style="color:#8c8c8c">↵</span></div><div class="t" style="left:1422px;width:89px;text-align:center;top:454.5px;line-height:17px;font-size:11.5px;color:#000;">收款方纳税人</div><div class="t" style="left:1422px;width:89px;text-align:center;top:471.5px;line-height:17px;font-size:11.5px;color:#000;">识别号<span style="color:#8c8c8c">↵</span></div><div class="t" style="left:1298px;width:61px;text-align:center;top:461.5px;line-height:20px;font-size:11.5px;color:#000;">发票代码<span style="color:#8c8c8c">↵</span></div><div class="t" style="left:1359px;width:63px;text-align:center;top:461.5px;line-height:20px;font-size:11.5px;color:#000;">发票号码<span style="color:#8c8c8c">↵</span></div><div class="t" style="left:755px;width:40px;text-align:center;top:495.5px;line-height:20px;font-size:11.5px;color:#000;font-family:'Liberation Serif',serif;">1<span style="color:#8c8c8c">↵</span></div><div class="t" style="left:839.5px;top:495.5px;line-height:20px;font-size:12px;color:#aaa;"><span style="color:#8c8c8c">↵</span></div><div class="t" style="left:922.5px;top:495.5px;line-height:20px;font-size:12px;color:#aaa;"><span style="color:#8c8c8c">↵</span></div><div class="t" style="left:1007.5px;top:495.5px;line-height:20px;font-size:12px;color:#aaa;"><span style="color:#8c8c8c">↵</span></div><div class="t" style="left:1102.0px;top:495.5px;line-height:20px;font-size:12px;color:#aaa;"><span style="color:#8c8c8c">↵</span></div><div class="t" style="left:1186.0px;top:495.5px;line-height:20px;font-size:12px;color:#aaa;"><span style="color:#8c8c8c">↵</span></div><div class="t" style="left:1262.0px;top:495.5px;line-height:20px;font-size:12px;color:#aaa;"><span style="color:#8c8c8c">↵</span></div><div class="t" style="left:1337.5px;top:495.5px;line-height:20px;font-size:12px;color:#aaa;"><span style="color:#8c8c8c">↵</span></div><div class="t" style="left:1399.5px;top:495.5px;line-height:20px;font-size:12px;color:#aaa;"><span style="color:#8c8c8c">↵</span></div><div class="t" style="left:1475.5px;top:495.5px;line-height:20px;font-size:12px;color:#aaa;"><span style="color:#8c8c8c">↵</span></div><div class="t" style="left:755px;width:40px;text-align:center;top:529.0px;line-height:20px;font-size:11.5px;color:#000;font-family:'Liberation Serif',serif;">2<span style="color:#8c8c8c">↵</span></div><div class="t" style="left:839.5px;top:529.0px;line-height:20px;font-size:12px;color:#aaa;"><span style="color:#8c8c8c">↵</span></div><div class="t" style="left:922.5px;top:529.0px;line-height:20px;font-size:12px;color:#aaa;"><span style="color:#8c8c8c">↵</span></div><div class="t" style="left:1007.5px;top:529.0px;line-height:20px;font-size:12px;color:#aaa;"><span style="color:#8c8c8c">↵</span></div><div class="t" style="left:1102.0px;top:529.0px;line-height:20px;font-size:12px;color:#aaa;"><span style="color:#8c8c8c">↵</span></div><div class="t" style="left:1186.0px;top:529.0px;line-height:20px;font-size:12px;color:#aaa;"><span style="color:#8c8c8c">↵</span></div><div class="t" style="left:1262.0px;top:529.0px;line-height:20px;font-size:12px;color:#aaa;"><span style="color:#8c8c8c">↵</span></div><div class="t" style="left:1337.5px;top:529.0px;line-height:20px;font-size:12px;color:#aaa;"><span style="color:#8c8c8c">↵</span></div><div class="t" style="left:1399.5px;top:529.0px;line-height:20px;font-size:12px;color:#aaa;"><span style="color:#8c8c8c">↵</span></div><div class="t" style="left:1475.5px;top:529.0px;line-height:20px;font-size:12px;color:#aaa;"><span style="color:#8c8c8c">↵</span></div><div class="t" style="left:755px;width:40px;text-align:center;top:563.5px;line-height:20px;font-size:11.5px;color:#000;font-family:'Liberation Serif',serif;">3<span style="color:#8c8c8c">↵</span></div><div class="t" style="left:839.5px;top:563.5px;line-height:20px;font-size:12px;color:#aaa;"><span style="color:#8c8c8c">↵</span></div><div class="t" style="left:922.5px;top:563.5px;line-height:20px;font-size:12px;color:#aaa;"><span style="color:#8c8c8c">↵</span></div><div class="t" style="left:1007.5px;top:563.5px;line-height:20px;font-size:12px;color:#aaa;"><span style="color:#8c8c8c">↵</span></div><div class="t" style="left:1102.0px;top:563.5px;line-height:20px;font-size:12px;color:#aaa;"><span style="color:#8c8c8c">↵</span></div><div class="t" style="left:1186.0px;top:563.5px;line-height:20px;font-size:12px;color:#aaa;"><span style="color:#8c8c8c">↵</span></div><div class="t" style="left:1262.0px;top:563.5px;line-height:20px;font-size:12px;color:#aaa;"><span style="color:#8c8c8c">↵</span></div><div class="t" style="left:1337.5px;top:563.5px;line-height:20px;font-size:12px;color:#aaa;"><span style="color:#8c8c8c">↵</span></div><div class="t" style="left:1399.5px;top:563.5px;line-height:20px;font-size:12px;color:#aaa;"><span style="color:#8c8c8c">↵</span></div><div class="t" style="left:1475.5px;top:563.5px;line-height:20px;font-size:12px;color:#aaa;"><span style="color:#8c8c8c">↵</span></div><div class="t" style="left:755px;width:40px;text-align:center;top:597.5px;line-height:20px;font-size:11.5px;color:#000;font-family:'Liberation Serif',serif;">…<span style="color:#8c8c8c">↵</span></div><div class="t" style="left:839.5px;top:597.5px;line-height:20px;font-size:12px;color:#aaa;"><span style="color:#8c8c8c">↵</span></div><div class="t" style="left:922.5px;top:597.5px;line-height:20px;font-size:12px;color:#aaa;"><span style="color:#8c8c8c">↵</span></div><div class="t" style="left:1007.5px;top:597.5px;line-height:20px;font-size:12px;color:#aaa;"><span style="color:#8c8c8c">↵</span></div><div class="t" style="left:1102.0px;top:597.5px;line-height:20px;font-size:12px;color:#aaa;"><span style="color:#8c8c8c">↵</span></div><div class="t" style="left:1186.0px;top:597.5px;line-height:20px;font-size:12px;color:#aaa;"><span style="color:#8c8c8c">↵</span></div><div class="t" style="left:1262.0px;top:597.5px;line-height:20px;font-size:12px;color:#aaa;"><span style="color:#8c8c8c">↵</span></div><div class="t" style="left:1337.5px;top:597.5px;line-height:20px;font-size:12px;color:#aaa;"><span style="color:#8c8c8c">↵</span></div><div class="t" style="left:1399.5px;top:597.5px;line-height:20px;font-size:12px;color:#aaa;"><span style="color:#8c8c8c">↵</span></div><div class="t" style="left:1475.5px;top:597.5px;line-height:20px;font-size:12px;color:#aaa;"><span style="color:#8c8c8c">↵</span></div><div class="t" style="left:757px;width:395px;text-align:center;top:630.5px;line-height:20px;font-size:11px;color:#000;">合计<span style="color:#8c8c8c">↵</span></div><div class="t" style="left:1186.0px;top:630.5px;line-height:20px;font-size:12px;color:#aaa;"><span style="color:#8c8c8c">↵</span></div><div class="t" style="left:1262.0px;top:630.5px;line-height:20px;font-size:12px;color:#aaa;"><span style="color:#8c8c8c">↵</span></div><div class="t" style="left:1413.5px;top:630.5px;line-height:20px;font-size:12px;color:#aaa;"><span style="color:#8c8c8c">↵</span></div><div class="r" style="left:736px;top:654px;width:467px;height:110px;background:#fff;border:3.5px solid #c8161d;box-sizing:border-box;"></div><div class="t" style="left:755px;top:657.3px;line-height:20px;font-size:11.5px;color:#000;">注：1.发票应与合同一一对应；<span style="color:#8c8c8c">↓</span></div><div class="t" style="left:780px;top:674.0px;line-height:20px;font-size:11.5px;color:#000;">2.合同金额仅填写与所投包别相关产品的签约金额；<span style="color:#8c8c8c">↓</span></div><div class="t" style="left:780px;top:690.7px;line-height:20px;font-size:11.5px;color:#000;">3.发票开具金额为含增值税金额；<span style="color:#8c8c8c">↵</span></div><div class="t" style="left:780px;top:707.4px;line-height:20px;font-size:11.5px;color:#000;">4.按 2024 年度分别进行统计；<span style="color:#8c8c8c">↓</span></div><div class="t" style="left:780px;top:724.1px;line-height:20px;font-size:11.5px;color:#000;">5.严格按照格式填写发票信息，以便网上查验。<span style="color:#8c8c8c">↵</span></div><div class="t" style="left:755px;top:741.0px;line-height:20px;font-size:10px;color:#aaa;"><span style="color:#8c8c8c">↵</span></div><div class="t" style="left:755px;top:757.0px;line-height:20px;font-size:10px;color:#aaa;"><span style="color:#8c8c8c">↵</span></div><div class="r" style="left:6px;top:1016px;width:1920px;height:22px;background:#f3f3f3;border-top:1px solid #d2d2d2;box-sizing:border-box;"></div><div class="t" style="left:18px;top:1017.5px;line-height:20px;font-size:12px;color:#444;">第 1 页，共 1 页</div><div class="t" style="left:155px;top:1017.5px;line-height:20px;font-size:12px;color:#444;">85/165 个字</div><svg class="s" style="left:242px;top:1020px;" width="15" height="15" viewBox="0 0 15 15"><path d="M1 1.5 H6.5 V13.5 H1 Z M6.5 1.5 H13 V13.5 H6.5" fill="none" stroke="#555" stroke-width="1"/><path d="M9 4 L12 8 M12 4 L9 8" stroke="#555" stroke-width="1"/><path d="M6.5 13.5 V15" stroke="#555"/></svg><div class="t" style="left:274px;top:1017.5px;line-height:20px;font-size:12px;color:#444;">简体中文(中国大陆)</div><div class="t" style="left:396px;top:1017.5px;line-height:20px;font-size:12px;color:#444;">修订: 关闭</div><svg class="s" style="left:470px;top:1020px;" width="16" height="15" viewBox="0 0 16 15"><path d="M7 2.5 A5 5 0 1 0 11.5 9" fill="none" stroke="#555" stroke-width="1.2" stroke-dasharray="2 1.2"/><path d="M4 1 V5" stroke="#555" stroke-width="1.2"/><text x="9" y="14.5" font-size="9" font-weight="700" fill="#333" font-family="Liberation Sans">?</text></svg><div class="t" style="left:488px;top:1017.5px;line-height:20px;font-size:12px;color:#444;">辅助功能: 不可用</div><svg class="s" style="left:1633px;top:1020px;" width="15" height="14" viewBox="0 0 15 14"><path d="M1 1.5 H6.5 C7 1.5 7.5 2 7.5 2.5 V13 M14 1.5 H8.5 C8 1.5 7.5 2 7.5 2.5 M1 1.5 V12 H7.5 M14 1.5 V12 H7.5" fill="none" stroke="#555" stroke-width="1"/><path d="M2.5 4 H6 M2.5 6.5 H6 M2.5 9 H6 M9 4 H12.5 M9 6.5 H12.5 M9 9 H12.5" stroke="#555" stroke-width="0.8"/></svg><div class="r" style="left:1661px;top:1017px;width:40px;height:21px;background:#c8c8c8;"></div><svg class="s" style="left:1674px;top:1020px;" width="14" height="14" viewBox="0 0 14 14"><rect x="0.5" y="0.5" width="13" height="13" fill="none" stroke="#555" stroke-width="1"/><path d="M3 3.5 H11 M3 6 H11 M3 8.5 H11 M3 11 H11" stroke="#555" stroke-width="1"/></svg><svg class="s" style="left:1714px;top:1019px;" width="16" height="16" viewBox="0 0 16 16"><path d="M0.5 0.5 H12.5 V7 M0.5 0.5 V12 H7" fill="none" stroke="#555" stroke-width="1"/><path d="M3 3 H10 M3 5.5 H10 M3 8 H7" stroke="#555" stroke-width="0.9"/><circle cx="11.5" cy="11.5" r="4" fill="#666"/><path d="M9 10 L11 9 L12.5 11 L11 13 M13 9.5 L14.5 11" stroke="#ddd" stroke-width="0.8" fill="none"/></svg><div class="r" style="left:1747px;top:1027px;width:8px;height:1.3px;background:#444;"></div><div class="r" style="left:1761px;top:1027px;width:98px;height:1px;background:#444;"></div><div class="r" style="left:1797px;top:1021px;width:5px;height:12px;background:#444;"></div><div class="r" style="left:1810px;top:1024px;width:1px;height:7px;background:#444;"></div><div class="r" style="left:1867px;top:1027px;width:8px;height:1.3px;background:#444;"></div><div class="r" style="left:1870.5px;top:1023.5px;width:1.3px;height:8px;background:#444;"></div><div class="t" style="left:1886px;top:1017.5px;line-height:20px;font-size:12px;color:#444;">80%</div></div><div class="w" style="left:1920px"><div class="r" style="left:6px;top:0px;width:1920px;height:62px;background:#2b579a;"></div><div class="t" style="left:901px;top:4.5px;line-height:20px;font-size:12px;color:#d3deef;">投标文件-新开&nbsp; -&nbsp; Word</div><svg class="s" style="left:28px;top:8px;" width="14" height="14" viewBox="0 0 14 14"><path d="M1 1 H11 L13 3 V13 H1 Z" fill="none" stroke="#fff" stroke-width="1.6"/><rect x="3.5" y="2" width="7" height="4" fill="#fff"/><rect x="3.5" y="8.5" width="7" height="4.5" fill="none" stroke="#fff" stroke-width="1.4"/><rect x="5.5" y="10" width="2" height="3" fill="#fff"/></svg><svg class="s" style="left:57px;top:9px;" width="15" height="13" viewBox="0 0 15 13"><path d="M2 5 H9 A4 4 0 0 1 9 12.5 H7" fill="none" stroke="#6b8dc4" stroke-width="1.6"/><path d="M5 1.5 L1.5 5 L5 8.5" fill="none" stroke="#6b8dc4" stroke-width="1.6"/></svg><svg class="s" style="left:78px;top:12.25px;" width="7" height="4.5" viewBox="0 0 7 4.5"><path d="M1 1 L3.5 3.5 L6 1" fill="none" stroke="#6b8dc4" stroke-width="1.2"/></svg><svg class="s" style="left:96px;top:8px;" width="14" height="14" viewBox="0 0 14 14"><path d="M9.5 2.8 A5.2 5.2 0 1 1 4 2.6" fill="none" stroke="#6b8dc4" stroke-width="1.6"/><path d="M9.5 0.5 V3.5 H12.5" fill="none" stroke="#6b8dc4" stroke-width="1.6"/></svg><svg class="s" style="left:129px;top:11px;" width="6" height="8" viewBox="0 0 6 8"><rect x="0" y="0.5" width="6" height="1.4" fill="#fff"/><path d="M0 3.5 H6 L3 7 Z" fill="#fff"/></svg><div class="r" style="left:67px;top:32px;width:49px;height:30px;background:#f3f3f3;"></div><div class="t" style="left:23px;top:35.5px;line-height:20px;font-size:12px;color:#ffffff;">文件</div><div class="t" style="left:79px;top:35.5px;line-height:20px;font-size:12px;color:#2b579a;">开始</div><div class="t" style="left:130px;top:35.5px;line-height:20px;font-size:12px;color:#ffffff;">插入</div><div class="t" style="left:181px;top:35.5px;line-height:20px;font-size:12px;color:#ffffff;">设计</div><div class="t" style="left:232px;top:35.5px;line-height:20px;font-size:12px;color:#ffffff;">布局</div><div class="t" style="left:283px;top:35.5px;line-height:20px;font-size:12px;color:#ffffff;">引用</div><div class="t" style="left:334px;top:35.5px;line-height:20px;font-size:12px;color:#ffffff;">邮件</div><div class="t" style="left:385px;top:35.5px;line-height:20px;font-size:12px;color:#ffffff;">审阅</div><div class="t" style="left:436px;top:35.5px;line-height:20px;font-size:12px;color:#ffffff;">视图</div><div class="t" style="left:487px;top:35.5px;line-height:20px;font-size:12px;color:#ffffff;">帮助</div><div class="t" style="left:538px;top:35.5px;line-height:20px;font-size:13px;color:#ffffff;">Acrobat</div><div class="t" style="left:611px;top:35.5px;line-height:20px;font-size:12px;color:#ffffff;">百度网盘</div><svg class="s" style="left:689px;top:37px;" width="13" height="17" viewBox="0 0 13 17"><path d="M6.5 1 A5.2 5.2 0 0 0 3.3 10.4 V12.5 H9.7 V10.4 A5.2 5.2 0 0 0 6.5 1 Z" fill="none" stroke="#fff" stroke-width="1.2"/><path d="M4 14.3 H9 M5 16 H8" stroke="#fff" stroke-width="1.2"/></svg><div class="t" style="left:715px;top:35.5px;line-height:20px;font-size:12px;color:#fff;">操作说明搜索</div><div class="r" style="left:1686px;top:5px;width:46px;height:19px;background:#a9bcd9;border-radius:1px;"></div><div class="t" style="left:1686px;width:46px;text-align:center;top:4.5px;line-height:20px;font-size:13px;color:#2b4f86;">登录</div><svg class="s" style="left:1758px;top:8px;" width="14" height="11" viewBox="0 0 14 11"><rect x="0.6" y="0.6" width="12.8" height="9.8" fill="none" stroke="#c8d4e8" stroke-width="1.1"/><path d="M0.6 3 H13.4" stroke="#c8d4e8" stroke-width="1.1"/><path d="M7 9.5 V4.5 M4.8 6.6 L7 4.4 L9.2 6.6" fill="none" stroke="#c8d4e8" stroke-width="1.1"/></svg><div class="r" style="left:1806px;top:12px;width:10px;height:1px;background:#d8e1ef;"></div><svg class="s" style="left:1852px;top:8px;" width="11" height="11" viewBox="0 0 11 11"><rect x="0.6" y="2.6" width="7.8" height="7.8" fill="none" stroke="#d8e1ef" stroke-width="1.1" rx="1"/><path d="M2.6 2.6 V0.6 H10.4 V8.4 H8.4" fill="none" stroke="#d8e1ef" stroke-width="1.1"/></svg><svg class="s" style="left:1897px;top:8px;" width="11" height="11" viewBox="0 0 11 11"><path d="M0.5 0.5 L10.5 10.5 M10.5 0.5 L0.5 10.5" stroke="#d8e1ef" stroke-width="1.1"/></svg><div class="r" style="left:1850px;top:35px;width:64px;height:24px;background:none;border:1.5px solid #fff;box-sizing:border-box;"></div><svg class="s" style="left:1855px;top:41px;" width="13" height="13" viewBox="0 0 13 13"><path d="M1 6 V12 H9 V9" fill="none" stroke="#fff" stroke-width="1.1"/><path d="M3.5 9.5 C4 6 6.5 4.5 9.5 4.5 M7.5 2 L10.5 4.5 L7.5 7" fill="none" stroke="#fff" stroke-width="1.2"/></svg><div class="t" style="left:1871px;top:35.5px;line-height:20px;font-size:13.5px;color:#fff;font-weight:700;">共享</div><svg class="s" style="left:1903px;top:45.75px;" width="7" height="4.5" viewBox="0 0 7 4.5"><path d="M1 1 L3.5 3.5 L6 1" fill="none" stroke="#fff" stroke-width="1.2"/></svg><div class="r" style="left:6px;top:62px;width:1920px;height:95px;background:#f3f3f3;"></div><svg class="s" style="left:23px;top:69px;" width="29" height="32" viewBox="0 0 29 32"><rect x="0" y="3.5" width="24" height="25.5" rx="1.5" fill="#eac47e"/><rect x="5" y="2.5" width="14" height="5" rx="1" fill="#6f6f6f"/><rect x="9.5" y="0" width="5" height="4" rx="1.5" fill="#6f6f6f"/><path d="M14.5 11.5 H23.5 L28.5 16.5 V30.5 H14.5 Z" fill="#fff" stroke="#8a8a8a" stroke-width="1"/><path d="M23.5 11.5 V16.5 H28.5" fill="none" stroke="#8a8a8a" stroke-width="1"/></svg><div class="t" style="left:23px;top:99.5px;line-height:20px;font-size:12px;color:#333;">粘贴</div><svg class="s" style="left:33px;top:121.5px;" width="8" height="5.0" viewBox="0 0 8 5.0"><path d="M1 1 L4.0 4.0 L7 1" fill="none" stroke="#444" stroke-width="1.2"/></svg><svg class="s" style="left:60px;top:68px;" width="14" height="16" viewBox="0 0 14 16"><path d="M3 1 L9 11 M11 1 L5 11" stroke="#aaa" stroke-width="1.3"/><circle cx="3.5" cy="12.5" r="2.5" fill="none" stroke="#b4b4b4" stroke-width="1.2"/><circle cx="10.5" cy="12.5" r="2.5" fill="none" stroke="#b4b4b4" stroke-width="1.2"/></svg><div class="t" style="left:78px;top:66.5px;line-height:20px;font-size:12px;color:#a6a6a6;">剪切</div><svg class="s" style="left:59px;top:91px;" width="16" height="15" viewBox="0 0 16 15"><path d="M0.5 0.5 H6 L8 2.5 V11 H0.5 Z" fill="#fff" stroke="#aaa" stroke-width="1"/><path d="M2 3.5 H5 M2 5.5 H5 M2 7.5 H5" stroke="#b4b4b4" stroke-width="1"/><path d="M6.5 4.5 H12 L15 7.5 V14.5 H6.5 Z" fill="#fff" stroke="#aaa" stroke-width="1"/><path d="M12 4.5 V7.5 H15" fill="none" stroke="#aaa" stroke-width="1"/><path d="M8.5 9 H13 M8.5 11 H13 M8.5 13 H13" stroke="#b4b4b4" stroke-width="1"/></svg><div class="t" style="left:78px;top:88.5px;line-height:20px;font-size:12px;color:#a6a6a6;">复制</div><svg class="s" style="left:59px;top:114px;" width="17" height="16" viewBox="0 0 17 16"><path d="M1 11 L7 6 L10 9 L5 15 Z" fill="#e2b56c"/><path d="M7 6 L12 1.5 L15.5 5 L10 9 Z" fill="#7a7a7a"/></svg><div class="t" style="left:78px;top:112.0px;line-height:20px;font-size:12px;color:#333;">格式刷</div><div class="t" style="left:41px;top:135.6px;line-height:20px;font-size:12px;color:#444;">剪贴板</div><svg class="s" style="left:116px;top:144px;" width="9" height="9" viewBox="0 0 9 9"><path d="M0.5 4 V0.5 H4 M0.5 0.5 H0.5" fill="none" stroke="#666" stroke-width="1"/><path d="M3 3 L8 8 M8 4.5 V8 H4.5" fill="none" stroke="#666" stroke-width="1"/></svg><div class="r" style="left:128px;top:66px;width:1px;height:86px;background:#b9b9b9;"></div><div class="r" style="left:137px;top:73px;width:106px;height:23px;background:#fff;border:1px solid #a9a9a9;box-sizing:border-box;"></div><div class="t" style="left:141px;top:74.5px;line-height:20px;font-size:13px;color:#222;">宋体</div><svg class="s" style="left:232px;top:82px;" width="7" height="4" viewBox="0 0 7 4"><path d="M0 0 H7 L3.5 4 Z" fill="#555"/></svg><div class="r" style="left:246px;top:73px;width:46px;height:23px;background:#fff;border:1px solid #a9a9a9;box-sizing:border-box;"></div><div class="t" style="left:250px;top:74.5px;line-height:20px;font-size:13px;color:#222;">四号</div><svg class="s" style="left:281px;top:82px;" width="7" height="4" viewBox="0 0 7 4"><path d="M0 0 H7 L3.5 4 Z" fill="#555"/></svg><svg class="s" style="left:300px;top:76px;" width="16" height="16" viewBox="0 0 16 16"><text x="0.5" y="14.2" font-size="13.5" font-family="Liberation Sans" font-weight="700" fill="#555">A</text><path d="M10.5 3.5 L13 0.5 L15.5 3.5 Z" fill="#4a7ebb"/></svg><svg class="s" style="left:325px;top:76px;" width="14" height="16" viewBox="0 0 14 16"><text x="0.3" y="14.2" font-size="10.5" font-family="Liberation Sans" font-weight="700" fill="#555">A</text><path d="M8.5 1 H13 L10.75 3.5 Z" fill="#4a7ebb"/></svg><div class="r" style="left:345px;top:74px;width:1px;height:22px;background:#d0d0d0;"></div><div class="t" style="left:353px;top:74.0px;line-height:20px;font-size:15px;color:#555;">Aa</div><svg class="s" style="left:372px;top:82.0px;" width="8" height="5.0" viewBox="0 0 8 5.0"><path d="M1 1 L4.0 4.0 L7 1" fill="none" stroke="#444" stroke-width="1.2"/></svg><div class="r" style="left:390px;top:74px;width:1px;height:22px;background:#d0d0d0;"></div><svg class="s" style="left:400px;top:76px;" width="15" height="16" viewBox="0 0 15 16"><path d="M1 9 L4 1 L7 9 M2 6.5 H6" fill="none" stroke="#555" stroke-width="1.2"/><path d="M5 12 L10 6 L14 9 L9 15 Z" fill="#e87a8a"/><path d="M5 12 L7 10 L11 13 L9 15 Z" fill="#f3b3bd"/></svg><div class="t" style="left:423px;top:76.0px;line-height:10px;font-size:9px;color:#666;">wén</div><div class="t" style="left:426px;top:84.0px;line-height:10px;font-size:10px;color:#4a7ebb;">文</div><svg class="s" style="left:446px;top:76px;" width="17" height="17" viewBox="0 0 17 17"><rect x="0.6" y="0.6" width="15.8" height="15.8" fill="none" stroke="#4a7ebb" stroke-width="1.2"/><text x="3.6" y="12.8" font-size="12.5" font-family="Liberation Sans" font-weight="700" fill="#555">A</text></svg><div class="r" style="left:137px;top:104px;width:22px;height:23px;background:#c5c5c5;border:1px solid #9d9d9d;box-sizing:border-box;"></div><div class="t" style="left:142px;top:104.5px;line-height:20px;font-size:13px;color:#444;font-weight:700;">B</div><div class="t" style="left:167px;top:104.5px;line-height:20px;font-size:14px;color:#444;font-family:'Liberation Serif',serif;"><i>I</i></div><div class="t" style="left:190px;top:104.0px;line-height:20px;font-size:13px;color:#444;"><u>U</u></div><svg class="s" style="left:210px;top:112.5px;" width="8" height="5.0" viewBox="0 0 8 5.0"><path d="M1 1 L4.0 4.0 L7 1" fill="none" stroke="#444" stroke-width="1.2"/></svg><div class="t" style="left:226px;top:105.0px;line-height:20px;font-size:11px;color:#555;"><s>abc</s></div><div class="t" style="left:253px;top:104.5px;line-height:20px;font-size:13px;color:#555;font-weight:700;letter-spacing:0px">x<span style="font-size:8px;color:#4a7ebb">2</span></div><div class="t" style="left:277px;top:104.5px;line-height:20px;font-size:13px;color:#555;font-weight:700;">x</div><div class="t" style="left:286px;top:105.0px;line-height:8px;font-size:8px;color:#4a7ebb;">2</div><div class="r" style="left:298px;top:105px;width:1px;height:21px;background:#d0d0d0;"></div><svg class="s" style="left:305px;top:106px;" width="18" height="17" viewBox="0 0 18 17"><text x="1.5" y="15" font-size="16" font-family="Liberation Sans" font-weight="700" fill="#fff" stroke="#4a7ebb" stroke-width="1.3" stroke-linejoin="round">A</text></svg><svg class="s" style="left:326px;top:112.5px;" width="8" height="5.0" viewBox="0 0 8 5.0"><path d="M1 1 L4.0 4.0 L7 1" fill="none" stroke="#444" stroke-width="1.2"/></svg><svg class="s" style="left:343px;top:107px;" width="18" height="17" viewBox="0 0 18 17"><text x="0" y="8" font-size="8" fill="#555" font-family="Liberation Sans">ab</text><path d="M6 10 L14 2 L16 4 L8 12 Z" fill="#777"/><rect x="1" y="12.5" width="16" height="4" fill="#ffff00"/></svg><svg class="s" style="left:366px;top:112.5px;" width="8" height="5.0" viewBox="0 0 8 5.0"><path d="M1 1 L4.0 4.0 L7 1" fill="none" stroke="#444" stroke-width="1.2"/></svg><svg class="s" style="left:382px;top:107px;" width="19" height="17" viewBox="0 0 19 17"><text x="4.3" y="11.8" font-size="13" font-family="Liberation Sans" font-weight="700" fill="#555">A</text><rect x="0" y="12.5" width="19" height="4" fill="#ff0000"/></svg><svg class="s" style="left:405px;top:112.5px;" width="8" height="5.0" viewBox="0 0 8 5.0"><path d="M1 1 L4.0 4.0 L7 1" fill="none" stroke="#444" stroke-width="1.2"/></svg><div class="r" style="left:423px;top:108px;width:14px;height:14px;background:#c8c8c8;"></div><svg class="s" style="left:423px;top:108px;" width="14" height="14" viewBox="0 0 14 14"><text x="2.3" y="11" font-size="13" font-family="Liberation Sans" font-weight="700" fill="#555">A</text></svg><svg class="s" style="left:446px;top:106px;" width="17" height="17" viewBox="0 0 17 17"><circle cx="8.5" cy="8.5" r="7.6" fill="none" stroke="#555" stroke-width="1"/></svg><div class="t" style="left:446px;width:17px;text-align:center;top:104.5px;line-height:20px;font-size:10px;color:#555;">字</div><div class="t" style="left:280px;top:135.6px;line-height:20px;font-size:12px;color:#444;">字体</div><svg class="s" style="left:460px;top:144px;" width="9" height="9" viewBox="0 0 9 9"><path d="M0.5 4 V0.5 H4 M0.5 0.5 H0.5" fill="none" stroke="#666" stroke-width="1"/><path d="M3 3 L8 8 M8 4.5 V8 H4.5" fill="none" stroke="#666" stroke-width="1"/></svg><div class="r" style="left:472px;top:66px;width:1px;height:86px;background:#b9b9b9;"></div><div class="r" style="left:520px;top:73px;width:37px;height:23px;background:#c5c5c5;border:1px solid #9d9d9d;box-sizing:border-box;"></div><svg class="s" style="left:484px;top:75px;" width="15" height="16" viewBox="0 0 15 16"><circle cx="2.5" cy="2.6" r="1.6" fill="#4a7ebb"/><circle cx="2.5" cy="8.6" r="1.6" fill="#4a7ebb"/><circle cx="2.5" cy="14.6" r="1.6" fill="#4a7ebb"/><path d="M6 2.5 H14 M6 8.5 H14 M6 14.5 H14" stroke="#6a6a6a" stroke-width="1"/></svg><svg class="s" style="left:507px;top:82.0px;" width="8" height="5.0" viewBox="0 0 8 5.0"><path d="M1 1 L4.0 4.0 L7 1" fill="none" stroke="#444" stroke-width="1.2"/></svg><svg class="s" style="left:523px;top:75px;" width="16" height="17" viewBox="0 0 16 17"><text x="0.5" y="5.5" font-size="6" font-weight="700" fill="#4a7ebb" font-family="Liberation Sans">1</text><text x="0.5" y="11.5" font-size="6" font-weight="700" fill="#4a7ebb" font-family="Liberation Sans">2</text><text x="0.5" y="17" font-size="6" font-weight="700" fill="#4a7ebb" font-family="Liberation Sans">3</text><path d="M6 2.5 H15 M6 8.5 H15 M6 14.5 H15" stroke="#6a6a6a" stroke-width="1"/></svg><svg class="s" style="left:545px;top:82.0px;" width="8" height="5.0" viewBox="0 0 8 5.0"><path d="M1 1 L4.0 4.0 L7 1" fill="none" stroke="#444" stroke-width="1.2"/></svg><svg class="s" style="left:561px;top:75px;" width="18" height="17" viewBox="0 0 18 17"><text x="0.5" y="5.5" font-size="6" font-weight="700" fill="#4a7ebb" font-family="Liberation Sans">1</text><text x="4.5" y="11" font-size="6" font-weight="700" fill="#4a7ebb" font-family="Liberation Sans">a</text><text x="9" y="17" font-size="6" font-weight="700" fill="#4a7ebb" font-family="Liberation Sans">i</text><path d="M6 2.5 H17 M10 8.5 H17 M13 14.5 H17" stroke="#6a6a6a" stroke-width="1"/></svg><svg class="s" style="left:583px;top:82.0px;" width="8" height="5.0" viewBox="0 0 8 5.0"><path d="M1 1 L4.0 4.0 L7 1" fill="none" stroke="#444" stroke-width="1.2"/></svg><div class="r" style="left:599px;top:74px;width:1px;height:22px;background:#d0d0d0;"></div><svg class="s" style="left:607px;top:75px;" width="17" height="16" viewBox="0 0 17 16"><path d="M0 2.5 H16 M8 5.5 H16 M8 8.5 H16 M8 11.5 H16 M0 14.5 H16" stroke="#6a6a6a" stroke-width="1"/><path d="M1 8.5 H6.5 M4 5.5 L1 8.5 L4 11.5" fill="none" stroke="#4a7ebb" stroke-width="1.8"/></svg><svg class="s" style="left:631px;top:75px;" width="17" height="16" viewBox="0 0 17 16"><path d="M0 2.5 H16 M8 5.5 H16 M8 8.5 H16 M8 11.5 H16 M0 14.5 H16" stroke="#6a6a6a" stroke-width="1"/><path d="M0 8.5 H5.5 M2.5 5.5 L5.5 8.5 L2.5 11.5" fill="none" stroke="#4a7ebb" stroke-width="1.8"/></svg><div class="r" style="left:654px;top:74px;width:1px;height:22px;background:#d0d0d0;"></div><svg class="s" style="left:661px;top:75px;" width="18" height="17" viewBox="0 0 18 17"><path d="M2.5 16 L9 6 L15.5 16 M5 12.5 H13" fill="none" stroke="#5a5a5a" stroke-width="2"/><path d="M1 3 H5 M3 1 L1 3 L3 5 M17 3 H13 M15 1 L17 3 L15 5" fill="none" stroke="#4a7ebb" stroke-width="1.2"/></svg><svg class="s" style="left:683px;top:82.0px;" width="8" height="5.0" viewBox="0 0 8 5.0"><path d="M1 1 L4.0 4.0 L7 1" fill="none" stroke="#444" stroke-width="1.2"/></svg><div class="r" style="left:700px;top:74px;width:1px;height:22px;background:#d0d0d0;"></div><svg class="s" style="left:708px;top:75px;" width="16" height="17" viewBox="0 0 16 17"><text x="0" y="7.5" font-size="8" font-weight="700" fill="#4a7ebb" font-family="Liberation Sans">A</text><text x="0.5" y="16" font-size="8" font-weight="700" fill="#8a5cc0" font-family="Liberation Sans">Z</text><path d="M12.5 1 V15.5 M9.5 12.5 L12.5 15.5 L15.5 12.5" fill="none" stroke="#6a6a6a" stroke-width="1.2"/></svg><div class="r" style="left:731px;top:74px;width:1px;height:22px;background:#d0d0d0;"></div><svg class="s" style="left:740px;top:77px;" width="12" height="13" viewBox="0 0 12 13"><path d="M10.5 0.5 V4.5 H4 M6 2.5 L4 4.5 L6 6.5" fill="none" stroke="#6a6a6a" stroke-width="1.2"/><path d="M1 10 H7 M5 8 L7 10 L5 12" fill="none" stroke="#6a6a6a" stroke-width="1.2"/></svg><div class="r" style="left:481px;top:104px;width:22px;height:23px;background:#c5c5c5;border:1px solid #9d9d9d;box-sizing:border-box;"></div><svg class="s" style="left:485px;top:109px;" width="15" height="13" viewBox="0 0 15 13"><path d="M0 1.5 h14M0 4.5 h10M0 7.5 h14M0 10.5 h10" stroke="#6a6a6a" stroke-width="1"/></svg><svg class="s" style="left:509px;top:109px;" width="15" height="13" viewBox="0 0 15 13"><path d="M0 1.5 h14M2 4.5 h10M0 7.5 h14M2 10.5 h10" stroke="#6a6a6a" stroke-width="1"/></svg><svg class="s" style="left:533px;top:109px;" width="15" height="13" viewBox="0 0 15 13"><path d="M0 1.5 h14M4 4.5 h10M0 7.5 h14M4 10.5 h10" stroke="#6a6a6a" stroke-width="1"/></svg><svg class="s" style="left:557px;top:109px;" width="15" height="13" viewBox="0 0 15 13"><path d="M0 1.5 h14M0 4.5 h14M0 7.5 h14M0 10.5 h14" stroke="#6a6a6a" stroke-width="1"/></svg><svg class="s" style="left:579px;top:106px;" width="18" height="17" viewBox="0 0 18 17"><path d="M1.5 1 V16 M16.5 1 V16" stroke="#4a7ebb" stroke-width="1"/><path d="M3.5 3.5 H14.5 M6 1.5 L4 3.5 L6 5.5 M12 1.5 L14 3.5 L12 5.5" fill="none" stroke="#4a7ebb" stroke-width="1.2"/><path d="M3 7.5 H15 M3 9.5 H15 M3 11.5 H15 M3 13.5 H15 M3 15.5 H15" stroke="#6a6a6a" stroke-width="1"/></svg><div class="r" style="left:603px;top:105px;width:1px;height:21px;background:#d0d0d0;"></div><svg class="s" style="left:612px;top:106px;" width="15" height="18" viewBox="0 0 15 18"><path d="M3 1 V17 M0.8 3.5 L3 1 L5.2 3.5 M0.8 14.5 L3 17 L5.2 14.5" fill="none" stroke="#4a7ebb" stroke-width="1.3"/><path d="M7 4 H14.5 M7 8 H14.5 M7 12 H14.5" stroke="#555" stroke-width="1.4"/></svg><svg class="s" style="left:633px;top:112.5px;" width="8" height="5.0" viewBox="0 0 8 5.0"><path d="M1 1 L4.0 4.0 L7 1" fill="none" stroke="#444" stroke-width="1.2"/></svg><div class="r" style="left:648px;top:105px;width:1px;height:21px;background:#d0d0d0;"></div><svg class="s" style="left:656px;top:107px;" width="17" height="16" viewBox="0 0 17 16"><path d="M2 8 L7.5 2.5 L12.5 7.5 L7 13 Z" fill="#fff" stroke="#555" stroke-width="1.1"/><path d="M6 1 V4" stroke="#555"/><path d="M13 6 C14.5 8 15 9.5 14 11" fill="none" stroke="#4a7ebb" stroke-width="1.6"/><rect x="0.5" y="13" width="15" height="2.5" fill="#fff" stroke="#999" stroke-width="0.8"/></svg><svg class="s" style="left:679px;top:112.5px;" width="8" height="5.0" viewBox="0 0 8 5.0"><path d="M1 1 L4.0 4.0 L7 1" fill="none" stroke="#444" stroke-width="1.2"/></svg><svg class="s" style="left:695px;top:108px;" width="14" height="14" viewBox="0 0 14 14"><rect x="0" y="0" width="13" height="13" fill="none"/><rect x="0" y="0" width="1" height="1" fill="#555"/><rect x="0" y="0" width="1" height="1" fill="#555"/><rect x="0" y="6" width="1" height="1" fill="#555"/><rect x="6" y="0" width="1" height="1" fill="#555"/><rect x="0" y="12" width="1" height="1" fill="#555"/><rect x="12" y="0" width="1" height="1" fill="#555"/><rect x="2" y="0" width="1" height="1" fill="#555"/><rect x="0" y="2" width="1" height="1" fill="#555"/><rect x="2" y="6" width="1" height="1" fill="#555"/><rect x="6" y="2" width="1" height="1" fill="#555"/><rect x="2" y="12" width="1" height="1" fill="#555"/><rect x="12" y="2" width="1" height="1" fill="#555"/><rect x="4" y="0" width="1" height="1" fill="#555"/><rect x="0" y="4" width="1" height="1" fill="#555"/><rect x="4" y="6" width="1" height="1" fill="#555"/><rect x="6" y="4" width="1" height="1" fill="#555"/><rect x="4" y="12" width="1" height="1" fill="#555"/><rect x="12" y="4" width="1" height="1" fill="#555"/><rect x="6" y="0" width="1" height="1" fill="#555"/><rect x="0" y="6" width="1" height="1" fill="#555"/><rect x="6" y="6" width="1" height="1" fill="#555"/><rect x="6" y="6" width="1" height="1" fill="#555"/><rect x="6" y="12" width="1" height="1" fill="#555"/><rect x="12" y="6" width="1" height="1" fill="#555"/><rect x="8" y="0" width="1" height="1" fill="#555"/><rect x="0" y="8" width="1" height="1" fill="#555"/><rect x="8" y="6" width="1" height="1" fill="#555"/><rect x="6" y="8" width="1" height="1" fill="#555"/><rect x="8" y="12" width="1" height="1" fill="#555"/><rect x="12" y="8" width="1" height="1" fill="#555"/><rect x="10" y="0" width="1" height="1" fill="#555"/><rect x="0" y="10" width="1" height="1" fill="#555"/><rect x="10" y="6" width="1" height="1" fill="#555"/><rect x="6" y="10" width="1" height="1" fill="#555"/><rect x="10" y="12" width="1" height="1" fill="#555"/><rect x="12" y="10" width="1" height="1" fill="#555"/><rect x="12" y="0" width="1" height="1" fill="#555"/><rect x="0" y="12" width="1" height="1" fill="#555"/><rect x="12" y="6" width="1" height="1" fill="#555"/><rect x="6" y="12" width="1" height="1" fill="#555"/><rect x="12" y="12" width="1" height="1" fill="#555"/><rect x="12" y="12" width="1" height="1" fill="#555"/><rect x="0" y="12" width="13" height="1.5" fill="#444"/></svg><svg class="s" style="left:718px;top:112.5px;" width="8" height="5.0" viewBox="0 0 8 5.0"><path d="M1 1 L4.0 4.0 L7 1" fill="none" stroke="#444" stroke-width="1.2"/></svg><div class="t" style="left:598px;top:135.6px;line-height:20px;font-size:12px;color:#444;">段落</div><svg class="s" style="left:751px;top:144px;" width="9" height="9" viewBox="0 0 9 9"><path d="M0.5 4 V0.5 H4 M0.5 0.5 H0.5" fill="none" stroke="#666" stroke-width="1"/><path d="M3 3 L8 8 M8 4.5 V8 H4.5" fill="none" stroke="#666" stroke-width="1"/></svg><div class="r" style="left:764px;top:66px;width:1px;height:86px;background:#b9b9b9;"></div><div class="r" style="left:774px;top:68px;width:868px;height:60px;background:#fff;border:1px solid #d2d2d2;box-sizing:border-box;"></div><div class="r" style="left:1641px;top:68px;width:24px;height:60px;background:#fff;border:1px solid #bdbdbd;box-sizing:border-box;"></div><svg class="s" style="left:1648px;top:92px;" width="10" height="10" viewBox="0 0 10 10"><path d="M1 1 H9" stroke="#555" stroke-width="1.2"/><path d="M1 4 L5 8 L9 4" fill="none" stroke="#555" stroke-width="1.2"/></svg><div class="t" style="left:1199px;top:135.6px;line-height:20px;font-size:12px;color:#444;">样式</div><svg class="s" style="left:1663px;top:144px;" width="9" height="9" viewBox="0 0 9 9"><path d="M0.5 4 V0.5 H4 M0.5 0.5 H0.5" fill="none" stroke="#666" stroke-width="1"/><path d="M3 3 L8 8 M8 4.5 V8 H4.5" fill="none" stroke="#666" stroke-width="1"/></svg><div class="r" style="left:1675px;top:66px;width:1px;height:86px;background:#b9b9b9;"></div><div class="t" style="left:783px;top:75px;width:62px;height:28px;line-height:28px;overflow:hidden;text-align:left;font-size:19px;color:#000;">一、</div><div class="t" style="left:776px;width:72px;text-align:center;top:102.5px;line-height:20px;font-size:12px;color:#555;">标题 1</div><div class="t" style="left:855px;top:75px;width:62px;height:28px;line-height:28px;overflow:hidden;text-align:left;font-family:'Liberation Mono',monospace;font-size:11.5px;color:#000;">AaBbCcDdE</div><div class="t" style="left:848px;width:72px;text-align:center;top:102.5px;line-height:20px;font-size:12px;color:#555;">↲ 正文</div><div class="t" style="left:927px;top:75px;width:62px;height:28px;line-height:28px;overflow:hidden;text-align:left;font-family:'Liberation Serif',serif;font-size:13px;color:#000;">AaBbCcDd</div><div class="t" style="left:920px;width:72px;text-align:center;top:102.5px;line-height:20px;font-size:12px;color:#555;">中文正文、</div><div class="t" style="left:999px;top:75px;width:62px;height:28px;line-height:28px;overflow:hidden;text-align:left;font-family:'Liberation Serif',serif;font-size:18px;color:#000;">1.&nbsp;&nbsp;&nbsp;&nbsp;&nbsp; Aa</div><div class="t" style="left:992px;width:72px;text-align:center;top:102.5px;line-height:20px;font-size:12px;color:#555;">标题 2</div><div class="r" style="left:1064px;top:69px;width:72px;height:57px;background:#fff;border:3px solid #c6c6c6;box-sizing:border-box;"></div><div class="t" style="left:1071px;top:75px;width:62px;height:28px;line-height:28px;overflow:hidden;text-align:left;font-family:'Liberation Serif',serif;font-size:17px;color:#000;">1. 1.</div><div class="t" style="left:1064px;width:72px;text-align:center;top:102.5px;line-height:20px;font-size:12px;color:#555;">标题 3</div><div class="t" style="left:1143px;top:75px;width:62px;height:28px;line-height:28px;overflow:hidden;text-align:left;font-family:'Liberation Serif',serif;font-size:15px;color:#000;">1. 1. 1.</div><div class="t" style="left:1136px;width:72px;text-align:center;top:102.5px;line-height:20px;font-size:12px;color:#555;">标题 4</div><div class="t" style="left:1215px;top:75px;width:62px;height:28px;line-height:28px;overflow:hidden;text-align:left;font-family:'Liberation Serif',serif;font-size:15px;color:#000;letter-spacing:1px;">1.1.1.1.</div><div class="t" style="left:1208px;width:72px;text-align:center;top:102.5px;line-height:20px;font-size:12px;color:#555;">标题 5</div><div class="t" style="left:1287px;top:75px;width:62px;height:28px;line-height:28px;overflow:hidden;text-align:left;font-family:'Liberation Serif',serif;font-size:15px;color:#000;letter-spacing:1px;">1.1.1.1.</div><div class="t" style="left:1280px;width:72px;text-align:center;top:102.5px;line-height:20px;font-size:12px;color:#555;">标题 6</div><div class="t" style="left:1359px;top:75px;width:62px;height:28px;line-height:28px;overflow:hidden;text-align:left;font-family:'Liberation Serif',serif;font-size:15px;color:#000;">1. 1. 1. 1</div><div class="t" style="left:1352px;width:72px;text-align:center;top:102.5px;line-height:20px;font-size:12px;color:#555;">标题 7</div><div class="t" style="left:1431px;top:75px;width:62px;height:28px;line-height:28px;overflow:hidden;text-align:left;font-size:17px;color:#000;">AaBbC</div><div class="t" style="left:1424px;width:72px;text-align:center;top:102.5px;line-height:20px;font-size:12px;color:#555;">标题</div><div class="t" style="left:1503px;top:75px;width:62px;height:28px;line-height:28px;overflow:hidden;text-align:left;font-size:17px;font-weight:700;color:#000;">AaBbC</div><div class="t" style="left:1496px;width:72px;text-align:center;top:102.5px;line-height:20px;font-size:12px;color:#555;">副标题</div><div class="t" style="left:1575px;top:75px;width:62px;height:28px;line-height:28px;overflow:hidden;text-align:left;font-size:12px;color:#555;"><i>AaBbCcDd</i></div><div class="t" style="left:1568px;width:72px;text-align:center;top:102.5px;line-height:20px;font-size:12px;color:#555;">不明显强调</div><svg class="s" style="left:1688px;top:70px;" width="14" height="14" viewBox="0 0 14 14"><circle cx="8.5" cy="5.5" r="4.3" fill="none" stroke="#4a7ebb" stroke-width="1.8"/><path d="M5.5 8.5 L1 13" stroke="#4a7ebb" stroke-width="2.4"/></svg><div class="t" style="left:1706px;top:66.5px;line-height:20px;font-size:12px;color:#333;">查找</div><svg class="s" style="left:1745px;top:74.5px;" width="8" height="5.0" viewBox="0 0 8 5.0"><path d="M1 1 L4.0 4.0 L7 1" fill="none" stroke="#444" stroke-width="1.2"/></svg><div class="t" style="left:1687px;top:90.0px;line-height:10px;font-size:9px;color:#8a5cc0;">ab</div><div class="t" style="left:1690px;top:97.5px;line-height:10px;font-size:9px;color:#4a7ebb;font-weight:700;">ac</div><div class="t" style="left:1706px;top:88.5px;line-height:20px;font-size:12px;color:#333;">替换</div><svg class="s" style="left:1690px;top:114px;" width="11" height="15" viewBox="0 0 11 15"><path d="M1 1 L1 12 L4 9.5 L6.5 14 L8 13.2 L5.8 8.8 L9.5 8.5 Z" fill="#fff" stroke="#555" stroke-width="1"/></svg><div class="t" style="left:1706px;top:111.0px;line-height:20px;font-size:12px;color:#333;">选择</div><svg class="s" style="left:1734px;top:119.25px;" width="7" height="4.5" viewBox="0 0 7 4.5"><path d="M1 1 L3.5 3.5 L6 1" fill="none" stroke="#444" stroke-width="1.2"/></svg><div class="t" style="left:1710px;top:135.6px;line-height:20px;font-size:12px;color:#444;">编辑</div><div class="r" style="left:1768px;top:66px;width:1px;height:86px;background:#b9b9b9;"></div><svg class="s" style="left:1789px;top:76px;" width="13" height="13" viewBox="0 0 13 13"><defs><radialGradient id="og"><stop offset="0.55" stop-color="#ff9800"/><stop offset="1" stop-color="#ffb74d" stop-opacity="0"/></radialGradient></defs><circle cx="6.5" cy="6.5" r="6.5" fill="url(#og)"/></svg><div class="t" style="left:1769px;width:57px;text-align:center;top:99.5px;line-height:20px;font-size:12px;color:#333;">加</div><div class="t" style="left:1769px;width:57px;text-align:center;top:114.0px;line-height:20px;font-size:12px;color:#333;">载项</div><div class="t" style="left:1769px;width:57px;text-align:center;top:135.6px;line-height:20px;font-size:12px;color:#444;">加载项</div><div class="r" style="left:1826px;top:66px;width:1px;height:86px;background:#b9b9b9;"></div><svg class="s" style="left:1847px;top:72px;" width="28" height="22" viewBox="0 0 28 22"><circle cx="14" cy="7" r="5.5" fill="none" stroke="#3cb4ea" stroke-width="3.2"/><path d="M9 5.5 A5.5 5.5 0 0 1 19.2 5.8" fill="none" stroke="#e84a6a" stroke-width="3.2"/><circle cx="6.5" cy="14" r="5" fill="none" stroke="#3cb4ea" stroke-width="3.2"/><circle cx="21.5" cy="14" r="5" fill="none" stroke="#2aa4e8" stroke-width="3.2"/></svg><div class="t" style="left:1827px;width:68px;text-align:center;top:100.0px;line-height:20px;font-size:12px;color:#333;">保存到</div><div class="t" style="left:1827px;width:68px;text-align:center;top:114.5px;line-height:20px;font-size:12px;color:#333;">百度网盘</div><div class="t" style="left:1827px;width:68px;text-align:center;top:135.6px;line-height:20px;font-size:12px;color:#444;">保存</div><div class="r" style="left:1895px;top:66px;width:1px;height:86px;background:#b9b9b9;"></div><svg class="s" style="left:1907px;top:146px;" width="13" height="7" viewBox="0 0 13 7"><path d="M1 6.5 L6.5 1 L12 6.5" fill="none" stroke="#555" stroke-width="1.2"/></svg><div class="r" style="left:6px;top:157px;width:1920px;height:30px;background:#fbf3bd;border-top:1px solid #b98f12;border-bottom:1px solid #b98f12;box-sizing:border-box;"></div><svg class="s" style="left:15px;top:161px;" width="22" height="22" viewBox="0 0 22 22"><circle cx="11" cy="11" r="11" fill="#4b7cb8"/><circle cx="11" cy="5.5" r="1.8" fill="#fff"/><rect x="9.5" y="8.5" width="3" height="9" fill="#fff"/></svg><div class="t" style="left:46px;top:160.5px;line-height:20px;font-size:12px;color:#333;font-weight:700;">获取正版 OFFICE</div><div class="t" style="left:151px;top:160.5px;line-height:20px;font-size:12px;color:#333;">你的许可证并非正版，你可能是盗版软件的受害者。立即通过正版 Office 避免中断并使文件保持安全。</div><div class="r" style="left:707px;top:160px;width:119px;height:23px;background:#fff;border:1px solid #ababab;box-sizing:border-box;"></div><div class="t" style="left:707px;width:119px;text-align:center;top:161.5px;line-height:20px;font-size:12px;color:#333;">获取正版 Office</div><div class="r" style="left:836px;top:160px;width:106px;height:23px;background:#fff;border:1px solid #ababab;box-sizing:border-box;"></div><div class="t" style="left:836px;width:106px;text-align:center;top:161.5px;line-height:20px;font-size:12px;color:#333;">了解详细信息</div><svg class="s" style="left:1905px;top:168px;" width="9" height="9" viewBox="0 0 9 9"><path d="M0.5 0.5 L8.5 8.5 M8.5 0.5 L0.5 8.5" stroke="#444" stroke-width="1.1"/></svg><div class="r" style="left:6px;top:187px;width:314px;height:829px;background:#e6e6e6;"></div><div class="r" style="left:320px;top:187px;width:1px;height:829px;background:#c9c9c9;"></div><div class="t" style="left:20px;top:200.7px;line-height:24px;font-size:20px;color:#333;">导航</div><svg class="s" style="left:249px;top:207px;" width="14" height="8" viewBox="0 0 14 8"><path d="M0.5 0.5 L7 7 L13.5 0.5" fill="none" stroke="#444" stroke-width="1.2"/></svg><svg class="s" style="left:292px;top:205px;" width="11" height="11" viewBox="0 0 11 11"><path d="M0.5 0.5 L10.5 10.5 M10.5 0.5 L0.5 10.5" stroke="#444" stroke-width="1.2"/></svg><div class="r" style="left:20px;top:243px;width:282px;height:26px;background:#fff;border:1px solid #b9b9b9;box-sizing:border-box;"></div><div class="t" style="left:27px;top:245.5px;line-height:20px;font-size:12px;color:#707070;">在文档中搜索</div><svg class="s" style="left:274px;top:248px;" width="15" height="15" viewBox="0 0 15 15"><circle cx="9.5" cy="5.5" r="4.2" fill="none" stroke="#2b579a" stroke-width="1.9"/><path d="M6.5 8.5 L1.5 13.5" stroke="#2b579a" stroke-width="2.4"/></svg><svg class="s" style="left:293px;top:254.25px;" width="7" height="4.5" viewBox="0 0 7 4.5"><path d="M1 1 L3.5 3.5 L6 1" fill="none" stroke="#444" stroke-width="1.2"/></svg><div class="t" style="left:20px;top:285.0px;line-height:20px;font-size:12px;color:#2b579a;font-weight:700;">标题</div><div class="t" style="left:70px;top:285.0px;line-height:20px;font-size:12px;color:#444;">页面</div><div class="t" style="left:119px;top:285.0px;line-height:20px;font-size:12px;color:#444;">结果</div><div class="r" style="left:20px;top:309px;width:26px;height:3px;background:#2b579a;"></div><div class="r" style="left:6px;top:316px;width:314px;height:683px;overflow:hidden"><div class="t" style="left:51px;top:0.0px;line-height:20px;font-size:12px;color:#444;">3. 投标人告知承诺函</div><div class="t" style="left:51px;top:21.0px;line-height:20px;font-size:12px;color:#444;">4. 机密信息接收承诺函</div><svg class="s" style="left:35px;top:49px;" width="7" height="7" viewBox="0 0 7 7"><path d="M7 0 V7 H0 Z" fill="#444"/></svg><div class="t" style="left:51px;top:42.0px;line-height:20px;font-size:12px;color:#444;">5. 企业资质</div><svg class="s" style="left:51px;top:70px;" width="7" height="7" viewBox="0 0 7 7"><path d="M7 0 V7 H0 Z" fill="#444"/></svg><div class="t" style="left:67px;top:63.0px;line-height:20px;font-size:12px;color:#444;">5.1. 管理体系</div><div class="t" style="left:84px;top:84.0px;line-height:20px;font-size:12px;color:#444;">5.1.1. 环境管理体系认证证书</div><div class="t" style="left:84px;top:105.0px;line-height:20px;font-size:12px;color:#444;">5.1.2. 职业健康安全管理体系认证...</div><div class="t" style="left:84px;top:126.0px;line-height:20px;font-size:12px;color:#444;">5.1.3. 质量管理体系认证证书</div><div class="t" style="left:67px;top:147.0px;line-height:20px;font-size:12px;color:#444;">5.2. 银行资信证明</div><div class="t" style="left:67px;top:168.0px;line-height:20px;font-size:12px;color:#444;">5.3. 绿色制造企业</div><svg class="s" style="left:35px;top:196px;" width="7" height="7" viewBox="0 0 7 7"><path d="M7 0 V7 H0 Z" fill="#444"/></svg><div class="t" style="left:51px;top:189.0px;line-height:20px;font-size:12px;color:#444;">6. 产品销售业绩</div><div class="t" style="left:67px;top:210.0px;line-height:20px;font-size:12px;color:#444;">6.1. 2024年业绩统计表</div><div class="r" style="left:62px;top:231px;width:221px;height:20px;background:#c5d8f2;"></div><div class="t" style="left:67px;top:231.0px;line-height:20px;font-size:12px;color:#444;">6.2. 2025年业绩统计表</div><svg class="s" style="left:51px;top:259px;" width="7" height="7" viewBox="0 0 7 7"><path d="M7 0 V7 H0 Z" fill="#444"/></svg><div class="t" style="left:67px;top:252.0px;line-height:20px;font-size:12px;color:#444;">6.3. 2024年合同发票</div><div class="t" style="left:84px;top:273.0px;line-height:20px;font-size:12px;color:#444;">6.3.1. 4704577067</div><div class="t" style="left:84px;top:294.0px;line-height:20px;font-size:12px;color:#444;">6.3.2. 4704583566</div><div class="t" style="left:84px;top:315.0px;line-height:20px;font-size:12px;color:#444;">6.3.3. 4704595350</div><div class="t" style="left:84px;top:336.0px;line-height:20px;font-size:12px;color:#444;">6.3.4. 4704596939</div><div class="t" style="left:84px;top:357.0px;line-height:20px;font-size:12px;color:#444;">6.3.5. 4704598166</div><div class="t" style="left:84px;top:378.0px;line-height:20px;font-size:12px;color:#444;">6.3.6. 4704598178</div><div class="t" style="left:84px;top:399.0px;line-height:20px;font-size:12px;color:#444;">6.3.7. 4704604417</div><div class="t" style="left:84px;top:420.0px;line-height:20px;font-size:12px;color:#444;">6.3.8. 4704612618</div><div class="t" style="left:84px;top:441.0px;line-height:20px;font-size:12px;color:#444;">6.3.9. 4704622773</div><div class="t" style="left:84px;top:462.0px;line-height:20px;font-size:12px;color:#444;">6.3.10. 4704622774</div><div class="t" style="left:84px;top:483.0px;line-height:20px;font-size:12px;color:#444;">6.3.11. 4704622776</div><div class="t" style="left:84px;top:504.0px;line-height:20px;font-size:12px;color:#444;">6.3.12. 4704636238</div><div class="t" style="left:84px;top:525.0px;line-height:20px;font-size:12px;color:#444;">6.3.13. 4704656018</div><div class="t" style="left:84px;top:546.0px;line-height:20px;font-size:12px;color:#444;">6.3.14. 4704697441</div><div class="t" style="left:84px;top:567.0px;line-height:20px;font-size:12px;color:#444;">6.3.15. 4704726841</div><div class="t" style="left:84px;top:588.0px;line-height:20px;font-size:12px;color:#444;">6.3.16. 4704689040</div><div class="t" style="left:84px;top:609.0px;line-height:20px;font-size:12px;color:#444;">6.3.17. 4704760755</div><div class="t" style="left:84px;top:630.0px;line-height:20px;font-size:12px;color:#444;">6.3.18. 4704806923</div><div class="t" style="left:84px;top:651.0px;line-height:20px;font-size:12px;color:#444;">6.3.19. 4704806930</div><div class="t" style="left:84px;top:672.0px;line-height:20px;font-size:12px;color:#444;">6.3.20. 4704830016</div></div><div class="r" style="left:321px;top:187px;width:1605px;height:829px;background:#e6e6e6;"></div><div class="r" style="left:321px;top:188px;width:29px;height:26px;background:#dadada;"></div><div class="r" style="left:325px;top:191px;width:21px;height:19px;background:#fff;"></div><svg class="s" style="left:331px;top:197px;" width="8" height="8" viewBox="0 0 8 8"><path d="M1 0 V6.5 H7.5" fill="none" stroke="#555" stroke-width="1.8"/></svg><div class="r" style="left:680px;top:187px;width:900px;height:268px;background:#fff;border:1px solid #c6c6c6;border-top:none;box-sizing:border-box;"></div><div class="r" style="left:736px;top:283px;width:788px;height:1px;background:#000;"></div><div class="r" style="left:736px;top:340px;width:788px;height:1px;background:#000;"></div><div class="r" style="left:736px;top:379px;width:788px;height:1px;background:#000;"></div><div class="r" style="left:736px;top:187px;width:1px;height:193px;background:#000;"></div><div class="r" style="left:774px;top:187px;width:1px;height:193px;background:#000;"></div><div class="r" style="left:856px;top:187px;width:1px;height:193px;background:#000;"></div><div class="r" style="left:962px;top:187px;width:1px;height:193px;background:#000;"></div><div class="r" style="left:1038px;top:187px;width:1px;height:193px;background:#000;"></div><div class="r" style="left:1114px;top:187px;width:1px;height:193px;background:#000;"></div><div class="r" style="left:1176px;top:187px;width:1px;height:193px;background:#000;"></div><div class="r" style="left:1266px;top:187px;width:1px;height:193px;background:#000;"></div><div class="r" style="left:1327px;top:187px;width:1px;height:193px;background:#000;"></div><div class="r" style="left:1451px;top:187px;width:1px;height:193px;background:#000;"></div><div class="r" style="left:1523px;top:187px;width:1px;height:193px;background:#000;"></div><div class="r" style="left:755px;top:380px;width:1px;height:19px;background:#9a9a9a;"></div><div class="r" style="left:1505px;top:380px;width:1px;height:19px;background:#9a9a9a;"></div><div class="r" style="left:737px;top:380px;width:18px;height:1px;background:#9a9a9a;"></div><div class="r" style="left:1505px;top:380px;width:19px;height:1px;background:#9a9a9a;"></div><div class="t" style="left:1114px;width:40px;text-align:center;top:387.0px;line-height:20px;font-size:9px;color:#888;">324<span style="color:#8c8c8c">↵</span></div><div class="t" style="left:774px;width:82px;text-align:center;top:206.0px;line-height:20px;font-size:11px;color:#000;font-family:'Liberation Serif',serif;">高强螺栓<span style="color:#8c8c8c">↵</span></div><div class="t" style="left:774px;width:82px;text-align:center;top:225.5px;line-height:20px;font-size:11px;color:#000;font-family:'Liberation Serif',serif;">成套双头螺柱<span style="color:#8c8c8c">↵</span></div><div class="t" style="left:774px;width:82px;text-align:center;top:244.5px;line-height:20px;font-size:11px;color:#000;font-family:'Liberation Serif',serif;">六角螺母<span style="color:#8c8c8c">↵</span></div><div class="t" style="left:774px;width:82px;text-align:center;top:264.0px;line-height:20px;font-size:11px;color:#000;font-family:'Liberation Serif',serif;">六角头螺栓<span style="color:#8c8c8c">↵</span></div><div class="t" style="left:962px;width:76px;text-align:center;top:206.0px;line-height:20px;font-size:11px;color:#000;font-family:'Liberation Serif',serif;">42021901<span style="color:#8c8c8c">↵</span></div><div class="t" style="left:962px;width:76px;text-align:center;top:225.5px;line-height:20px;font-size:11px;color:#000;font-family:'Liberation Serif',serif;">42030301<span style="color:#8c8c8c">↵</span></div><div class="t" style="left:962px;width:76px;text-align:center;top:244.5px;line-height:20px;font-size:11px;color:#000;font-family:'Liberation Serif',serif;">42040201<span style="color:#8c8c8c">↵</span></div><div class="t" style="left:962px;width:76px;text-align:center;top:264.0px;line-height:20px;font-size:11px;color:#000;font-family:'Liberation Serif',serif;">42020101<span style="color:#8c8c8c">↵</span></div><div class="t" style="left:736px;width:38px;text-align:center;top:235.0px;line-height:20px;font-size:11px;color:#000;font-family:'Liberation Serif',serif;">11<span style="color:#8c8c8c">↵</span></div><div class="t" style="left:856px;width:106px;text-align:center;top:225.5px;line-height:20px;font-size:11px;color:#000;font-family:'Liberation Serif',serif;">辽河石油勘探局有</div><div class="t" style="left:856px;width:106px;text-align:center;top:245.0px;line-height:20px;font-size:11px;color:#000;font-family:'Liberation Serif',serif;">限公司物资分公司<span style="color:#8c8c8c">↵</span></div><div class="t" style="left:1038px;width:76px;text-align:center;top:235.0px;line-height:20px;font-size:11px;color:#000;font-family:'Liberation Serif',serif;">4705344481<span style="color:#8c8c8c">↵</span></div><div class="t" style="left:1114px;width:62px;text-align:center;top:225.5px;line-height:20px;font-size:11px;color:#000;font-family:'Liberation Serif',serif;">16.90918</div><div class="t" style="left:1114px;width:62px;text-align:center;top:244.5px;line-height:20px;font-size:11px;color:#000;font-family:'Liberation Serif',serif;">2<span style="color:#8c8c8c">↵</span></div><div class="t" style="left:1176px;width:90px;text-align:center;top:235.0px;line-height:20px;font-size:11px;color:#000;font-family:'Liberation Serif',serif;">16.909182<span style="color:#8c8c8c">↵</span></div><div class="t" style="left:1266px;width:61px;text-align:center;top:235.0px;line-height:20px;font-size:11px;color:#000;font-family:'Liberation Serif',serif;">/<span style="color:#8c8c8c">↵</span></div><div class="t" style="left:1327px;width:124px;text-align:center;top:235.0px;line-height:20px;font-size:11px;color:#000;font-family:'Liberation Serif',serif;">25212000000066025144<span style="color:#8c8c8c">↵</span></div><div class="t" style="left:1451px;width:72px;text-align:center;top:225.5px;line-height:20px;font-size:11px;color:#000;font-family:'Liberation Serif',serif;">9121112112</div><div class="t" style="left:1451px;width:72px;text-align:center;top:244.5px;line-height:20px;font-size:11px;color:#000;font-family:'Liberation Serif',serif;">26358560<span style="color:#8c8c8c">↵</span></div><div class="t" style="left:774px;width:82px;text-align:center;top:283.0px;line-height:20px;font-size:11px;color:#000;font-family:'Liberation Serif',serif;">六角螺母<span style="color:#8c8c8c">↵</span></div><div class="t" style="left:774px;width:82px;text-align:center;top:302.0px;line-height:20px;font-size:11px;color:#000;font-family:'Liberation Serif',serif;">高强螺栓<span style="color:#8c8c8c">↵</span></div><div class="t" style="left:774px;width:82px;text-align:center;top:321.0px;line-height:20px;font-size:11px;color:#000;font-family:'Liberation Serif',serif;">平垫圈<span style="color:#8c8c8c">↵</span></div><div class="t" style="left:962px;width:76px;text-align:center;top:283.0px;line-height:20px;font-size:11px;color:#000;font-family:'Liberation Serif',serif;">42040201<span style="color:#8c8c8c">↵</span></div><div class="t" style="left:962px;width:76px;text-align:center;top:302.0px;line-height:20px;font-size:11px;color:#000;font-family:'Liberation Serif',serif;">42021901<span style="color:#8c8c8c">↵</span></div><div class="t" style="left:962px;width:76px;text-align:center;top:321.0px;line-height:20px;font-size:11px;color:#000;font-family:'Liberation Serif',serif;">42050101<span style="color:#8c8c8c">↵</span></div><div class="t" style="left:736px;width:38px;text-align:center;top:302.0px;line-height:20px;font-size:11px;color:#000;font-family:'Liberation Serif',serif;">12<span style="color:#8c8c8c">↵</span></div><div class="t" style="left:856px;width:106px;text-align:center;top:293.0px;line-height:20px;font-size:11px;color:#000;font-family:'Liberation Serif',serif;">辽河石油勘探局有</div><div class="t" style="left:856px;width:106px;text-align:center;top:312.5px;line-height:20px;font-size:11px;color:#000;font-family:'Liberation Serif',serif;">限公司物资分公司<span style="color:#8c8c8c">↵</span></div><div class="t" style="left:1038px;width:76px;text-align:center;top:302.0px;line-height:20px;font-size:11px;color:#000;font-family:'Liberation Serif',serif;">4705349171<span style="color:#8c8c8c">↵</span></div><div class="t" style="left:1114px;width:62px;text-align:center;top:302.0px;line-height:20px;font-size:11px;color:#000;font-family:'Liberation Serif',serif;">1.596236<span style="color:#8c8c8c">↵</span></div><div class="t" style="left:1176px;width:90px;text-align:center;top:302.0px;line-height:20px;font-size:11px;color:#000;font-family:'Liberation Serif',serif;">1.596236<span style="color:#8c8c8c">↵</span></div><div class="t" style="left:1266px;width:61px;text-align:center;top:302.0px;line-height:20px;font-size:11px;color:#000;font-family:'Liberation Serif',serif;">/<span style="color:#8c8c8c">↵</span></div><div class="t" style="left:1327px;width:124px;text-align:center;top:302.0px;line-height:20px;font-size:11px;color:#000;font-family:'Liberation Serif',serif;">25212000000065723927<span style="color:#8c8c8c">↵</span></div><div class="t" style="left:1451px;width:72px;text-align:center;top:293.5px;line-height:20px;font-size:11px;color:#000;font-family:'Liberation Serif',serif;">9121112112</div><div class="t" style="left:1451px;width:72px;text-align:center;top:312.5px;line-height:20px;font-size:11px;color:#000;font-family:'Liberation Serif',serif;">26358560<span style="color:#8c8c8c">↵</span></div><div class="t" style="left:774px;width:82px;text-align:center;top:341.0px;line-height:20px;font-size:11px;color:#000;font-family:'Liberation Serif',serif;">高强螺栓<span style="color:#8c8c8c">↵</span></div><div class="t" style="left:774px;width:82px;text-align:center;top:360.0px;line-height:20px;font-size:11px;color:#000;font-family:'Liberation Serif',serif;">六角螺母<span style="color:#8c8c8c">↵</span></div><div class="t" style="left:962px;width:76px;text-align:center;top:341.0px;line-height:20px;font-size:11px;color:#000;font-family:'Liberation Serif',serif;">42021901<span style="color:#8c8c8c">↵</span></div><div class="t" style="left:962px;width:76px;text-align:center;top:360.0px;line-height:20px;font-size:11px;color:#000;font-family:'Liberation Serif',serif;">42040201<span style="color:#8c8c8c">↵</span></div><div class="t" style="left:736px;width:38px;text-align:center;top:351.0px;line-height:20px;font-size:11px;color:#000;font-family:'Liberation Serif',serif;">13<span style="color:#8c8c8c">↵</span></div><div class="t" style="left:856px;width:106px;text-align:center;top:341.0px;line-height:20px;font-size:11px;color:#000;font-family:'Liberation Serif',serif;">辽河石油勘探局有</div><div class="t" style="left:856px;width:106px;text-align:center;top:360.0px;line-height:20px;font-size:11px;color:#000;font-family:'Liberation Serif',serif;">限公司物资分公司<span style="color:#8c8c8c">↵</span></div><div class="t" style="left:1038px;width:76px;text-align:center;top:351.0px;line-height:20px;font-size:11px;color:#000;font-family:'Liberation Serif',serif;">4705349957<span style="color:#8c8c8c">↵</span></div><div class="t" style="left:1114px;width:62px;text-align:center;top:351.0px;line-height:20px;font-size:11px;color:#000;font-family:'Liberation Serif',serif;">3.515922<span style="color:#8c8c8c">↵</span></div><div class="t" style="left:1176px;width:90px;text-align:center;top:351.0px;line-height:20px;font-size:11px;color:#000;font-family:'Liberation Serif',serif;">3.515922<span style="color:#8c8c8c">↵</span></div><div class="t" style="left:1266px;width:61px;text-align:center;top:351.0px;line-height:20px;font-size:11px;color:#000;font-family:'Liberation Serif',serif;">/<span style="color:#8c8c8c">↵</span></div><div class="t" style="left:1327px;width:124px;text-align:center;top:351.0px;line-height:20px;font-size:11px;color:#000;font-family:'Liberation Serif',serif;">25212000000065745197<span style="color:#8c8c8c">↵</span></div><div class="t" style="left:1451px;width:72px;text-align:center;top:341.0px;line-height:20px;font-size:11px;color:#000;font-family:'Liberation Serif',serif;">9121112112</div><div class="t" style="left:1451px;width:72px;text-align:center;top:360.0px;line-height:20px;font-size:11px;color:#000;font-family:'Liberation Serif',serif;">26358560<span style="color:#8c8c8c">↵</span></div><div class="t" style="left:1527px;top:209.0px;line-height:20px;font-size:10px;color:#aaa;"><span style="color:#8c8c8c">↵</span></div><div class="t" style="left:1527px;top:285.0px;line-height:20px;font-size:10px;color:#aaa;"><span style="color:#8c8c8c">↵</span></div><div class="t" style="left:1527px;top:342.0px;line-height:20px;font-size:10px;color:#aaa;"><span style="color:#8c8c8c">↵</span></div><div class="r" style="left:680px;top:467px;width:900px;height:600px;background:#fff;border:1px solid #c6c6c6;box-sizing:border-box;"></div><div class="r" style="left:755px;top:523px;width:1px;height:18px;background:#9a9a9a;"></div><div class="r" style="left:737px;top:541px;width:19px;height:1px;background:#9a9a9a;"></div><div class="r" style="left:1505px;top:523px;width:1px;height:18px;background:#9a9a9a;"></div><div class="r" style="left:1505px;top:541px;width:19px;height:1px;background:#9a9a9a;"></div><div class="r" style="left:736px;top:576px;width:788px;height:1px;background:#000;"></div><div class="r" style="left:736px;top:610px;width:788px;height:1px;background:#000;"></div><div class="r" style="left:736px;top:543px;width:1px;height:33px;background:#000;"></div><div class="r" style="left:774px;top:543px;width:1px;height:33px;background:#000;"></div><div class="r" style="left:856px;top:543px;width:1px;height:33px;background:#000;"></div><div class="r" style="left:962px;top:543px;width:1px;height:33px;background:#000;"></div><div class="r" style="left:1038px;top:543px;width:1px;height:33px;background:#000;"></div><div class="r" style="left:1114px;top:543px;width:1px;height:33px;background:#000;"></div><div class="r" style="left:1176px;top:543px;width:1px;height:33px;background:#000;"></div><div class="r" style="left:1266px;top:543px;width:1px;height:33px;background:#000;"></div><div class="r" style="left:1327px;top:543px;width:1px;height:33px;background:#000;"></div><div class="r" style="left:1451px;top:543px;width:1px;height:33px;background:#000;"></div><div class="r" style="left:1523px;top:543px;width:1px;height:33px;background:#000;"></div><div class="r" style="left:736px;top:576px;width:1px;height:35px;background:#000;"></div><div class="r" style="left:1114px;top:576px;width:1px;height:35px;background:#000;"></div><div class="r" style="left:1176px;top:576px;width:1px;height:35px;background:#000;"></div><div class="r" style="left:1266px;top:576px;width:1px;height:35px;background:#000;"></div><div class="r" style="left:1523px;top:576px;width:1px;height:35px;background:#000;"></div><div class="t" style="left:774px;width:82px;text-align:center;top:543.0px;line-height:20px;font-size:11px;color:#000;font-family:'Liberation Serif',serif;">平垫圈<span style="color:#8c8c8c">↵</span></div><div class="t" style="left:962px;width:76px;text-align:center;top:543.0px;line-height:20px;font-size:11px;color:#000;font-family:'Liberation Serif',serif;">42050101<span style="color:#8c8c8c">↵</span></div><div class="t" style="left:1527px;top:546.0px;line-height:20px;font-size:10px;color:#aaa;"><span style="color:#8c8c8c">↵</span></div><div class="t" style="left:736px;width:378px;text-align:center;top:584.0px;line-height:20px;font-size:11px;color:#000;">合计<span style="color:#8c8c8c">↵</span></div><div class="t" style="left:1114px;width:62px;text-align:center;top:584.0px;line-height:20px;font-size:11px;color:#000;font-family:'Liberation Serif',serif;">48.25124<span style="color:#8c8c8c">↵</span></div><div class="t" style="left:1176px;width:90px;text-align:center;top:584.0px;line-height:20px;font-size:11px;color:#000;font-family:'Liberation Serif',serif;">48.25124<span style="color:#8c8c8c">↵</span></div><div class="t" style="left:1398px;top:584.0px;line-height:20px;font-size:10px;color:#aaa;"><span style="color:#8c8c8c">↵</span></div><div class="t" style="left:1527px;top:579.0px;line-height:20px;font-size:10px;color:#aaa;"><span style="color:#8c8c8c">↵</span></div><div class="t" style="left:1527px;top:613.0px;line-height:20px;font-size:10px;color:#aaa;"><span style="color:#8c8c8c">↵</span></div><div class="r" style="left:727px;top:607px;width:647px;height:103px;background:#fff;border:3.6px solid #c8161d;box-sizing:border-box;"></div><div class="t" style="left:742px;top:610.6px;line-height:20px;font-size:10.5px;color:#000;letter-spacing:0.3px;">注：1. 发票应与合同一一对应；<span style="color:#8c8c8c">↓</span></div><div class="t" style="left:765px;top:627.1px;line-height:20px;font-size:10.5px;color:#000;letter-spacing:0.3px;">2. 合同金额仅填写与所投包别相关产品的签约金额；<span style="color:#8c8c8c">↓</span></div><div class="t" style="left:765px;top:643.6px;line-height:20px;font-size:10.5px;color:#000;letter-spacing:0.3px;">3. 发票开具金额为含增值税金额；业绩统计日期以合同签订日期为准，金额以发票开具金额为准。<span style="color:#8c8c8c">↵</span></div><div class="t" style="left:765px;top:660.1px;line-height:20px;font-size:10.5px;color:#000;letter-spacing:0.3px;">4. 按2023年、2024年二个年度分别进行统计；销售业绩起止时间：2023.1.1-2024.12.31。<span style="color:#8c8c8c">↓</span></div><div class="t" style="left:765px;top:676.6px;line-height:20px;font-size:10.5px;color:#000;letter-spacing:0.3px;">5. 严格按照格式填写发票信息，以便网上查验。<span style="color:#8c8c8c">↵</span></div><div class="r" style="left:321px;top:187px;width:1605px;height:30px;background:#e6e6e6;"></div><div class="r" style="left:321px;top:188px;width:29px;height:26px;background:#dadada;"></div><div class="r" style="left:325px;top:191px;width:21px;height:19px;background:#fff;"></div><svg class="s" style="left:331px;top:197px;" width="8" height="8" viewBox="0 0 8 8"><path d="M1 0 V6.5 H7.5" fill="none" stroke="#555" stroke-width="1.8"/></svg><div class="r" style="left:679px;top:192px;width:900px;height:16px;background:#c6c6c6;"></div><div class="r" style="left:749px;top:192px;width:753px;height:16px;background:#fff;"></div><div class="t" style="left:677.8px;width:20.0px;text-align:center;top:194.0px;line-height:14px;font-size:10px;color:#555;">6</div><div class="t" style="left:700.2px;width:20.0px;text-align:center;top:194.0px;line-height:14px;font-size:10px;color:#555;">4</div><div class="t" style="left:722.6px;width:20.0px;text-align:center;top:194.0px;line-height:14px;font-size:10px;color:#555;">2</div><div class="t" style="left:767.4px;width:20.0px;text-align:center;top:194.0px;line-height:14px;font-size:10px;color:#555;">2</div><div class="t" style="left:789.8px;width:20.0px;text-align:center;top:194.0px;line-height:14px;font-size:10px;color:#555;">4</div><div class="t" style="left:812.2px;width:20.0px;text-align:center;top:194.0px;line-height:14px;font-size:10px;color:#555;">6</div><div class="t" style="left:834.6px;width:20.0px;text-align:center;top:194.0px;line-height:14px;font-size:10px;color:#555;">8</div><div class="t" style="left:857.0px;width:20.0px;text-align:center;top:194.0px;line-height:14px;font-size:10px;color:#555;">10</div><div class="t" style="left:879.4px;width:20.0px;text-align:center;top:194.0px;line-height:14px;font-size:10px;color:#555;">12</div><div class="t" style="left:901.8px;width:20.0px;text-align:center;top:194.0px;line-height:14px;font-size:10px;color:#555;">14</div><div class="t" style="left:924.2px;width:20.0px;text-align:center;top:194.0px;line-height:14px;font-size:10px;color:#555;">16</div><div class="t" style="left:946.6px;width:20.0px;text-align:center;top:194.0px;line-height:14px;font-size:10px;color:#555;">18</div><div class="t" style="left:969.0px;width:20.0px;text-align:center;top:194.0px;line-height:14px;font-size:10px;color:#555;">20</div><div class="t" style="left:991.4px;width:20.0px;text-align:center;top:194.0px;line-height:14px;font-size:10px;color:#555;">22</div><div class="t" style="left:1013.8px;width:20.0px;text-align:center;top:194.0px;line-height:14px;font-size:10px;color:#555;">24</div><div class="t" style="left:1036.2px;width:20.0px;text-align:center;top:194.0px;line-height:14px;font-size:10px;color:#555;">26</div><div class="t" style="left:1058.6px;width:20.0px;text-align:center;top:194.0px;line-height:14px;font-size:10px;color:#555;">28</div><div class="t" style="left:1081.0px;width:20.0px;text-align:center;top:194.0px;line-height:14px;font-size:10px;color:#555;">30</div><div class="t" style="left:1103.4px;width:20.0px;text-align:center;top:194.0px;line-height:14px;font-size:10px;color:#555;">32</div><div class="t" style="left:1125.8px;width:20.0px;text-align:center;top:194.0px;line-height:14px;font-size:10px;color:#555;">34</div><div class="t" style="left:1148.2px;width:20.0px;text-align:center;top:194.0px;line-height:14px;font-size:10px;color:#555;">36</div><div class="t" style="left:1170.6px;width:20.0px;text-align:center;top:194.0px;line-height:14px;font-size:10px;color:#555;">38</div><div class="t" style="left:1193.0px;width:20.0px;text-align:center;top:194.0px;line-height:14px;font-size:10px;color:#555;">40</div><div class="t" style="left:1215.4px;width:20.0px;text-align:center;top:194.0px;line-height:14px;font-size:10px;color:#555;">42</div><div class="t" style="left:1237.8px;width:20.0px;text-align:center;top:194.0px;line-height:14px;font-size:10px;color:#555;">44</div><div class="t" style="left:1260.1999999999998px;width:20.0px;text-align:center;top:194.0px;line-height:14px;font-size:10px;color:#555;">46</div><div class="t" style="left:1282.6px;width:20.0px;text-align:center;top:194.0px;line-height:14px;font-size:10px;color:#555;">48</div><div class="t" style="left:1305.0px;width:20.0px;text-align:center;top:194.0px;line-height:14px;font-size:10px;color:#555;">50</div><div class="t" style="left:1327.4px;width:20.0px;text-align:center;top:194.0px;line-height:14px;font-size:10px;color:#555;">52</div><div class="t" style="left:1349.8px;width:20.0px;text-align:center;top:194.0px;line-height:14px;font-size:10px;color:#555;">54</div><div class="t" style="left:1372.1999999999998px;width:20.0px;text-align:center;top:194.0px;line-height:14px;font-size:10px;color:#555;">56</div><div class="t" style="left:1394.6px;width:20.0px;text-align:center;top:194.0px;line-height:14px;font-size:10px;color:#555;">58</div><div class="t" style="left:1417.0px;width:20.0px;text-align:center;top:194.0px;line-height:14px;font-size:10px;color:#555;">60</div><div class="t" style="left:1439.4px;width:20.0px;text-align:center;top:194.0px;line-height:14px;font-size:10px;color:#555;">62</div><div class="t" style="left:1461.8px;width:20.0px;text-align:center;top:194.0px;line-height:14px;font-size:10px;color:#555;">64</div><div class="t" style="left:1484.1999999999998px;width:20.0px;text-align:center;top:194.0px;line-height:14px;font-size:10px;color:#555;">66</div><div class="t" style="left:1506.6px;width:20.0px;text-align:center;top:194.0px;line-height:14px;font-size:10px;color:#555;">68</div><div class="t" style="left:1529.0px;width:20.0px;text-align:center;top:194.0px;line-height:14px;font-size:10px;color:#555;">70</div><div class="t" style="left:1551.4px;width:20.0px;text-align:center;top:194.0px;line-height:14px;font-size:10px;color:#555;">72</div><svg class="s" style="left:749px;top:189px;" width="12" height="29" viewBox="0 0 12 29"><path d="M0.5 0.5 H10.5 V4.7 L5.5 9.9 L0.5 4.7 Z" fill="#fff" stroke="#8a8a8a" stroke-width="1"/><path d="M5.5 11.9 L10.5 17 V21.2 H0.5 V17 Z" fill="#fff" stroke="#8a8a8a" stroke-width="1"/><rect x="0.5" y="21.2" width="10" height="6.5" fill="#fff" stroke="#8a8a8a" stroke-width="1"/></svg><svg class="s" style="left:1497px;top:202px;" width="11" height="9" viewBox="0 0 11 9"><path d="M0.5 8.5 V4.5 L5.5 0.5 L10.5 4.5 V8.5 Z" fill="#fff" stroke="#999" stroke-width="1"/></svg><div class="r" style="left:6px;top:1016px;width:1920px;height:22px;background:#f3f3f3;border-top:1px solid #d2d2d2;box-sizing:border-box;"></div><div class="t" style="left:18px;top:1017.5px;line-height:20px;font-size:12px;color:#444;">第 324 页，共 658 页</div><div class="t" style="left:155px;top:1017.5px;line-height:20px;font-size:12px;color:#444;">17687 个字</div><svg class="s" style="left:237px;top:1020px;" width="15" height="15" viewBox="0 0 15 15"><path d="M1 1.5 H6.5 V13.5 H1 Z M6.5 1.5 H13 V13.5 H6.5" fill="none" stroke="#555" stroke-width="1"/><path d="M9 4 L12 8 M12 4 L9 8" stroke="#555" stroke-width="1"/><path d="M6.5 13.5 V15" stroke="#555"/></svg><div class="t" style="left:269px;top:1017.5px;line-height:20px;font-size:12px;color:#444;">英语(美国)</div><div class="t" style="left:391px;top:1017.5px;line-height:20px;font-size:12px;color:#444;">修订: 关闭</div><svg class="s" style="left:465px;top:1020px;" width="16" height="15" viewBox="0 0 16 15"><path d="M7 2.5 A5 5 0 1 0 11.5 9" fill="none" stroke="#555" stroke-width="1.2" stroke-dasharray="2 1.2"/><path d="M4 1 V5" stroke="#555" stroke-width="1.2"/><text x="9" y="14.5" font-size="9" font-weight="700" fill="#333" font-family="Liberation Sans">?</text></svg><div class="t" style="left:483px;top:1017.5px;line-height:20px;font-size:12px;color:#444;">辅助功能: 调查</div><svg class="s" style="left:1633px;top:1020px;" width="15" height="14" viewBox="0 0 15 14"><path d="M1 1.5 H6.5 C7 1.5 7.5 2 7.5 2.5 V13 M14 1.5 H8.5 C8 1.5 7.5 2 7.5 2.5 M1 1.5 V12 H7.5 M14 1.5 V12 H7.5" fill="none" stroke="#555" stroke-width="1"/><path d="M2.5 4 H6 M2.5 6.5 H6 M2.5 9 H6 M9 4 H12.5 M9 6.5 H12.5 M9 9 H12.5" stroke="#555" stroke-width="0.8"/></svg><div class="r" style="left:1661px;top:1017px;width:40px;height:21px;background:#c8c8c8;"></div><svg class="s" style="left:1674px;top:1020px;" width="14" height="14" viewBox="0 0 14 14"><rect x="0.5" y="0.5" width="13" height="13" fill="none" stroke="#555" stroke-width="1"/><path d="M3 3.5 H11 M3 6 H11 M3 8.5 H11 M3 11 H11" stroke="#555" stroke-width="1"/></svg><svg class="s" style="left:1714px;top:1019px;" width="16" height="16" viewBox="0 0 16 16"><path d="M0.5 0.5 H12.5 V7 M0.5 0.5 V12 H7" fill="none" stroke="#555" stroke-width="1"/><path d="M3 3 H10 M3 5.5 H10 M3 8 H7" stroke="#555" stroke-width="0.9"/><circle cx="11.5" cy="11.5" r="4" fill="#666"/><path d="M9 10 L11 9 L12.5 11 L11 13 M13 9.5 L14.5 11" stroke="#ddd" stroke-width="0.8" fill="none"/></svg><div class="r" style="left:1747px;top:1027px;width:8px;height:1.3px;background:#444;"></div><div class="r" style="left:1761px;top:1027px;width:98px;height:1px;background:#444;"></div><div class="r" style="left:1797px;top:1021px;width:5px;height:12px;background:#444;"></div><div class="r" style="left:1810px;top:1024px;width:1px;height:7px;background:#444;"></div><div class="r" style="left:1867px;top:1027px;width:8px;height:1.3px;background:#444;"></div><div class="r" style="left:1870.5px;top:1023.5px;width:1.3px;height:8px;background:#444;"></div><div class="t" style="left:1886px;top:1017.5px;line-height:20px;font-size:12px;color:#444;">80%</div></div><div class="r" style="left:6px;top:1037px;width:3837px;height:1px;background:#fbfbfb;"></div><div class="r" style="left:0px;top:1038px;width:1925px;height:6px;background:#21323b;"></div><div class="r" style="left:1925px;top:1038px;width:1918px;height:6px;background:#222f36;"></div><div class="r" style="left:202px;top:1038px;width:48px;height:6px;background:#a86832;"></div><div class="r" style="left:937px;top:1038px;width:48px;height:6px;background:#555f63;"></div><div class="r" style="left:2122px;top:1038px;width:48px;height:6px;background:#a86832;"></div><div class="r" style="left:2857px;top:1038px;width:48px;height:6px;background:#555f63;"></div></body></html>
